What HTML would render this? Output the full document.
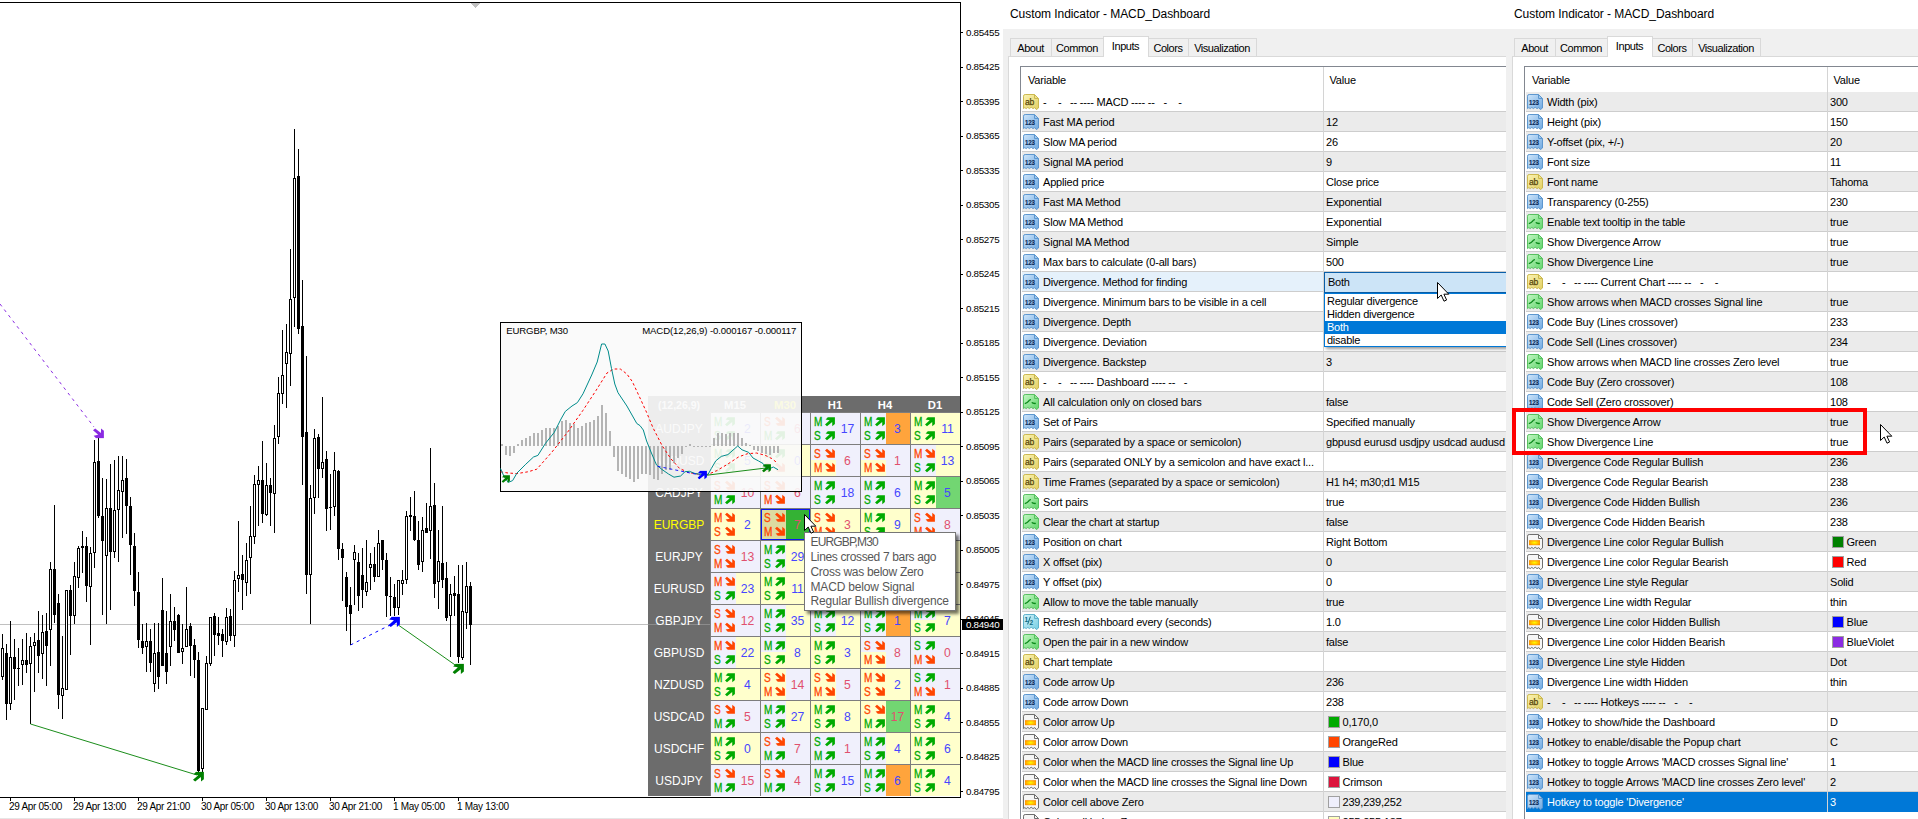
<!DOCTYPE html><html><head><meta charset="utf-8"><title>MACD Dashboard</title><style>
html,body{margin:0;padding:0;}
body{width:1918px;height:819px;overflow:hidden;background:#fff;position:relative;font-family:"Liberation Sans",Arial,sans-serif;}
.abs{position:absolute;}
#chart{position:absolute;left:0;top:0;width:1003px;height:819px;overflow:hidden;background:#fff;}
.dlg{position:absolute;top:0;height:819px;overflow:hidden;background:#fff;font-size:11px;color:#000;letter-spacing:-0.19px;}
.dlg .title{position:absolute;top:7px;font-size:12px;letter-spacing:-0.06px;white-space:nowrap;color:#000;}
.dlg .gray{position:absolute;left:0;top:29px;right:0;bottom:0;background:#f0f0f0;}
.tab{letter-spacing:-0.45px;text-indent:-1px;padding-top:1px;position:absolute;top:38px;height:18px;border:1px solid #d9d9d9;border-bottom:none;background:#f0f0f0;box-sizing:border-box;white-space:nowrap;line-height:17px;text-align:center;}
.tab.sel{top:36px;height:21px;background:#fff;z-index:3;line-height:17px;}
.page{position:absolute;top:56px;bottom:-5px;right:-5px;background:#fff;border:1px solid #d9d9d9;}
.tbl{position:absolute;top:66px;bottom:-5px;right:-5px;background:#fff;border:1px solid #828790;overflow:hidden;}
.hdr{position:absolute;left:0;top:0;right:0;height:24px;background:#fff;}
.hdr span{position:absolute;top:7px;white-space:nowrap;}
.row{position:absolute;left:1px;right:0;height:19px;border-bottom:1px solid #cdcdcd;white-space:nowrap;}
.row.g{background:#ebebeb;}
.row.sel{background:#e5f1fb;}
.row.hi{background:#0078d7;color:#fff;border-bottom-color:#0078d7;}
.row svg.ic{position:absolute;left:1px;top:2px;}
.row .t{position:absolute;left:21px;top:3.5px;line-height:13px;white-space:pre;}
.row .v{position:absolute;top:3.5px;line-height:13px;}
.row .sw{position:absolute;top:3.5px;width:10px;height:10px;border:1px solid #a0a0a0;box-sizing:content-box;}
.vdiv{position:absolute;top:0;bottom:0;width:1px;background:#d4d4d4;z-index:2;}
#dash{position:absolute;left:648px;top:396px;width:312px;height:400px;background:#6c6c6c;}
#dash .h{position:absolute;top:0;height:17px;line-height:18.2px;color:#fff;font-weight:bold;font-size:11.3px;text-align:center;width:50px;}
#dash .lab{position:absolute;left:0;width:62px;height:32px;line-height:34px;color:#fff;font-size:12px;text-align:center;}
.cell{position:absolute;width:49px;height:31px;border-left:1px solid #7d7d7d;border-top:1px solid #7d7d7d;font-size:12.5px;overflow:hidden;}
.cell i{position:absolute;display:block;}
.cell .l{position:absolute;left:2.9px;font-size:12px;line-height:12px;height:12px;transform:scaleX(0.84);transform-origin:0 0;-webkit-text-stroke:0.3px;}
.cell .n{position:absolute;left:24.5px;width:24px;top:0;height:31px;line-height:32px;text-align:center;font-size:12.2px;}
.cell svg{position:absolute;left:14px;}
#popup{position:absolute;left:500px;top:322px;width:300px;height:168px;border:1px solid #000;background:rgba(250,250,250,0.91);font-size:9px;}
#tip{position:absolute;left:804px;top:532px;width:150px;height:77px;border:1px solid #767676;background:#fff;box-shadow:3px 3px 3px rgba(0,0,0,0.55);}
#tip div{position:absolute;left:5px;white-space:nowrap;}
</style></head><body>
<svg width="0" height="0" style="position:absolute"><defs>
<linearGradient id="gy" x1="0" y1="0" x2="1" y2="1"><stop offset="0" stop-color="#fbf4b4"/><stop offset="1" stop-color="#e2cf63"/></linearGradient>
<linearGradient id="gb" x1="0" y1="0" x2="1" y2="1"><stop offset="0" stop-color="#cfe6fb"/><stop offset="1" stop-color="#6fa8e0"/></linearGradient>
<linearGradient id="gg" x1="0" y1="0" x2="1" y2="1"><stop offset="0" stop-color="#c4f7c4"/><stop offset="1" stop-color="#5fd46a"/></linearGradient>
<linearGradient id="gc" x1="0" y1="0" x2="1" y2="1"><stop offset="0" stop-color="#d6f3fa"/><stop offset="1" stop-color="#74cde2"/></linearGradient>
<radialGradient id="go" cx="0.5" cy="0.5" r="0.6"><stop offset="0" stop-color="#ffff00"/><stop offset="1" stop-color="#ff8800"/></radialGradient>
<symbol id="i-ab" viewBox="0 0 16 16"><path d="M0.5,2.2 Q0.5,0.5 2.2,0.5 L11.5,0.5 L15.5,4.5 L15.5,14 L13.4,15.6 L11.8,13.6 L10,14.6 L8.2,13.2 L6.4,14.6 L4.8,13.4 L3.2,14.6 L1.8,13.6 L0.5,14.6 Z" fill="url(#gy)" stroke="#cbb84f" stroke-width="1"/><path d="M11.5,0.5 L11.5,4.5 L15.5,4.5" fill="none" stroke="#cbb84f" stroke-width="1"/><text x="2" y="10.7" font-size="9.3" font-family="Liberation Sans,Arial,sans-serif" fill="#54460a" stroke="#54460a" stroke-width="0.25" textLength="9.2" lengthAdjust="spacingAndGlyphs">ab</text></symbol>
<symbol id="i-n" viewBox="0 0 16 16"><path d="M0.5,2.2 Q0.5,0.5 2.2,0.5 L11.5,0.5 L15.5,4.5 L15.5,14 L13.4,15.6 L11.8,13.6 L10,14.6 L8.2,13.2 L6.4,14.6 L4.8,13.4 L3.2,14.6 L1.8,13.6 L0.5,14.6 Z" fill="url(#gb)" stroke="#5d97cf" stroke-width="1"/><path d="M11.5,0.5 L11.5,4.5 L15.5,4.5" fill="none" stroke="#5d97cf" stroke-width="1"/><text x="2" y="10.7" font-size="7.8" font-weight="bold" font-family="Liberation Sans,Arial,sans-serif" fill="#0a2a58" stroke="#0a2a58" stroke-width="0.15" textLength="9.8" lengthAdjust="spacingAndGlyphs">123</text></symbol>
<symbol id="i-b" viewBox="0 0 16 16"><path d="M0.5,2.2 Q0.5,0.5 2.2,0.5 L11.5,0.5 L15.5,4.5 L15.5,14 L13.4,15.6 L11.8,13.6 L10,14.6 L8.2,13.2 L6.4,14.6 L4.8,13.4 L3.2,14.6 L1.8,13.6 L0.5,14.6 Z" fill="url(#gg)" stroke="#58c060" stroke-width="1"/><path d="M11.5,0.5 L11.5,4.5 L15.5,4.5" fill="none" stroke="#58c060" stroke-width="1"/><path d="M1.8,9.6 Q4,9.2 5.4,7.4 Q6.6,5.6 8,5.6" fill="none" stroke="#0b8a1a" stroke-width="1.4"/><path d="M8.8,8.4 Q9.8,9.6 12.8,9.4" fill="none" stroke="#0b8a1a" stroke-width="1.4"/></symbol>
<symbol id="i-d" viewBox="0 0 16 16"><path d="M0.5,2.2 Q0.5,0.5 2.2,0.5 L11.5,0.5 L15.5,4.5 L15.5,14 L13.4,15.6 L11.8,13.6 L10,14.6 L8.2,13.2 L6.4,14.6 L4.8,13.4 L3.2,14.6 L1.8,13.6 L0.5,14.6 Z" fill="url(#gc)" stroke="#5fb3cc" stroke-width="1"/><path d="M11.5,0.5 L11.5,4.5 L15.5,4.5" fill="none" stroke="#5fb3cc" stroke-width="1"/><text x="1.6" y="7.8" font-size="6.5" font-weight="bold" font-family="Liberation Sans,Arial,sans-serif" fill="#116a80">1</text><path d="M4.6,10.4 L7.4,2.6" stroke="#116a80" stroke-width="1" fill="none"/><text x="6.6" y="11.4" font-size="6.5" font-weight="bold" font-family="Liberation Sans,Arial,sans-serif" fill="#116a80">2</text></symbol>
<symbol id="i-c" viewBox="0 0 16 16"><path d="M0.5,2.2 Q0.5,0.5 2.2,0.5 L11.5,0.5 L15.5,4.5 L15.5,14 L13.4,15.6 L11.8,13.6 L10,14.6 L8.2,13.2 L6.4,14.6 L4.8,13.4 L3.2,14.6 L1.8,13.6 L0.5,14.6 Z" fill="#f6f6f6" stroke="#6e6e6e" stroke-width="1"/><path d="M11.5,0.5 L11.5,4.5 L15.5,4.5" fill="none" stroke="#6e6e6e" stroke-width="1"/><rect x="2" y="6.2" width="11" height="5" fill="url(#go)"/></symbol>
<symbol id="au" viewBox="0 0 10 10"><polygon points="2.8,0.3 9.9,0.3 9.9,7 7.3,9.2 7.2,4.9 2,9.2 0,7.6 4.7,3.3 0.6,2.5"/></symbol>
<symbol id="ad" viewBox="0 0 10 10"><polygon points="2.8,9.7 9.9,9.7 9.9,3 7.3,0.8 7.2,5.1 2,0.8 0,2.4 4.7,6.7 0.6,7.5"/></symbol>
</defs></svg>
<div id="chart">
<svg class="abs" style="left:0;top:0" width="1003" height="819" viewBox="0 0 1003 819" shape-rendering="crispEdges">
<rect x="0" y="2" width="961" height="1" fill="#000"/>
<rect x="960" y="2" width="1" height="796" fill="#000"/>
<rect x="0" y="797" width="961" height="1" fill="#000"/>
<polygon points="470,3 480,3 475,8" fill="#c0c0c0"/>
<rect x="0" y="624" width="960" height="1" fill="#c0c0c0"/>
<rect x="2" y="634" width="1" height="46" fill="#000"/>
<rect x="1" y="648" width="3" height="29" fill="#000"/>
<rect x="2" y="649" width="1" height="27" fill="#fff"/>
<rect x="6" y="644" width="1" height="76" fill="#000"/>
<rect x="5" y="653" width="3" height="51" fill="#000"/>
<rect x="10" y="621" width="1" height="89" fill="#000"/>
<rect x="9" y="657" width="3" height="47" fill="#000"/>
<rect x="10" y="658" width="1" height="45" fill="#fff"/>
<rect x="14" y="639" width="1" height="61" fill="#000"/>
<rect x="13" y="657" width="3" height="12" fill="#000"/>
<rect x="18" y="648" width="1" height="38" fill="#000"/>
<rect x="17" y="668" width="3" height="1" fill="#000"/>
<rect x="22" y="639" width="1" height="46" fill="#000"/>
<rect x="21" y="660" width="3" height="5" fill="#000"/>
<rect x="22" y="661" width="1" height="3" fill="#fff"/>
<rect x="26" y="633" width="1" height="40" fill="#000"/>
<rect x="25" y="660" width="3" height="5" fill="#000"/>
<rect x="30" y="637" width="1" height="87" fill="#000"/>
<rect x="29" y="646" width="3" height="18" fill="#000"/>
<rect x="30" y="647" width="1" height="16" fill="#fff"/>
<rect x="34" y="633" width="1" height="59" fill="#000"/>
<rect x="33" y="642" width="3" height="4" fill="#000"/>
<rect x="34" y="643" width="1" height="2" fill="#fff"/>
<rect x="38" y="611" width="1" height="62" fill="#000"/>
<rect x="37" y="640" width="3" height="16" fill="#000"/>
<rect x="42" y="615" width="1" height="64" fill="#000"/>
<rect x="41" y="632" width="3" height="22" fill="#000"/>
<rect x="42" y="633" width="1" height="20" fill="#fff"/>
<rect x="46" y="613" width="1" height="73" fill="#000"/>
<rect x="45" y="631" width="3" height="15" fill="#000"/>
<rect x="50" y="562" width="1" height="104" fill="#000"/>
<rect x="49" y="569" width="3" height="61" fill="#000"/>
<rect x="50" y="570" width="1" height="59" fill="#fff"/>
<rect x="54" y="505" width="1" height="118" fill="#000"/>
<rect x="53" y="569" width="3" height="46" fill="#000"/>
<rect x="58" y="594" width="1" height="115" fill="#000"/>
<rect x="57" y="603" width="3" height="92" fill="#000"/>
<rect x="62" y="636" width="1" height="83" fill="#000"/>
<rect x="61" y="688" width="3" height="8" fill="#000"/>
<rect x="62" y="689" width="1" height="6" fill="#fff"/>
<rect x="66" y="590" width="1" height="100" fill="#000"/>
<rect x="65" y="590" width="3" height="100" fill="#000"/>
<rect x="66" y="591" width="1" height="98" fill="#fff"/>
<rect x="70" y="585" width="1" height="70" fill="#000"/>
<rect x="69" y="590" width="3" height="26" fill="#000"/>
<rect x="74" y="562" width="1" height="62" fill="#000"/>
<rect x="73" y="576" width="3" height="40" fill="#000"/>
<rect x="74" y="577" width="1" height="38" fill="#fff"/>
<rect x="78" y="546" width="1" height="42" fill="#000"/>
<rect x="77" y="548" width="3" height="30" fill="#000"/>
<rect x="78" y="549" width="1" height="28" fill="#fff"/>
<rect x="82" y="531" width="1" height="42" fill="#000"/>
<rect x="81" y="546" width="3" height="2" fill="#000"/>
<rect x="86" y="537" width="1" height="65" fill="#000"/>
<rect x="85" y="546" width="3" height="40" fill="#000"/>
<rect x="90" y="547" width="1" height="98" fill="#000"/>
<rect x="89" y="553" width="3" height="34" fill="#000"/>
<rect x="90" y="554" width="1" height="32" fill="#fff"/>
<rect x="94" y="440" width="1" height="128" fill="#000"/>
<rect x="93" y="462" width="3" height="91" fill="#000"/>
<rect x="94" y="463" width="1" height="89" fill="#fff"/>
<rect x="98" y="438" width="1" height="80" fill="#000"/>
<rect x="97" y="461" width="3" height="55" fill="#000"/>
<rect x="102" y="478" width="1" height="137" fill="#000"/>
<rect x="101" y="516" width="3" height="25" fill="#000"/>
<rect x="106" y="479" width="1" height="145" fill="#000"/>
<rect x="105" y="508" width="3" height="48" fill="#000"/>
<rect x="106" y="509" width="1" height="46" fill="#fff"/>
<rect x="110" y="464" width="1" height="146" fill="#000"/>
<rect x="109" y="508" width="3" height="44" fill="#000"/>
<rect x="114" y="460" width="1" height="98" fill="#000"/>
<rect x="113" y="510" width="3" height="42" fill="#000"/>
<rect x="114" y="511" width="1" height="40" fill="#fff"/>
<rect x="118" y="456" width="1" height="106" fill="#000"/>
<rect x="117" y="490" width="3" height="20" fill="#000"/>
<rect x="118" y="491" width="1" height="18" fill="#fff"/>
<rect x="122" y="456" width="1" height="82" fill="#000"/>
<rect x="121" y="480" width="3" height="12" fill="#000"/>
<rect x="122" y="481" width="1" height="10" fill="#fff"/>
<rect x="126" y="459" width="1" height="75" fill="#000"/>
<rect x="125" y="478" width="3" height="28" fill="#000"/>
<rect x="130" y="497" width="1" height="78" fill="#000"/>
<rect x="129" y="506" width="3" height="39" fill="#000"/>
<rect x="134" y="533" width="1" height="73" fill="#000"/>
<rect x="133" y="546" width="3" height="45" fill="#000"/>
<rect x="138" y="572" width="1" height="76" fill="#000"/>
<rect x="137" y="592" width="3" height="48" fill="#000"/>
<rect x="142" y="624" width="1" height="30" fill="#000"/>
<rect x="141" y="641" width="3" height="7" fill="#000"/>
<rect x="146" y="623" width="1" height="49" fill="#000"/>
<rect x="145" y="641" width="3" height="6" fill="#000"/>
<rect x="146" y="642" width="1" height="4" fill="#fff"/>
<rect x="150" y="629" width="1" height="43" fill="#000"/>
<rect x="149" y="641" width="3" height="22" fill="#000"/>
<rect x="154" y="623" width="1" height="69" fill="#000"/>
<rect x="153" y="653" width="3" height="31" fill="#000"/>
<rect x="154" y="654" width="1" height="29" fill="#fff"/>
<rect x="158" y="623" width="1" height="66" fill="#000"/>
<rect x="157" y="652" width="3" height="25" fill="#000"/>
<rect x="162" y="578" width="1" height="88" fill="#000"/>
<rect x="161" y="610" width="3" height="56" fill="#000"/>
<rect x="166" y="611" width="1" height="73" fill="#000"/>
<rect x="165" y="653" width="3" height="19" fill="#000"/>
<rect x="170" y="594" width="1" height="72" fill="#000"/>
<rect x="169" y="621" width="3" height="26" fill="#000"/>
<rect x="170" y="622" width="1" height="24" fill="#fff"/>
<rect x="174" y="607" width="1" height="34" fill="#000"/>
<rect x="173" y="621" width="3" height="9" fill="#000"/>
<rect x="178" y="614" width="1" height="39" fill="#000"/>
<rect x="177" y="615" width="3" height="38" fill="#000"/>
<rect x="182" y="624" width="1" height="40" fill="#000"/>
<rect x="181" y="648" width="3" height="4" fill="#000"/>
<rect x="182" y="649" width="1" height="2" fill="#fff"/>
<rect x="186" y="587" width="1" height="60" fill="#000"/>
<rect x="185" y="629" width="3" height="18" fill="#000"/>
<rect x="186" y="630" width="1" height="16" fill="#fff"/>
<rect x="190" y="623" width="1" height="53" fill="#000"/>
<rect x="189" y="626" width="3" height="20" fill="#000"/>
<rect x="194" y="639" width="1" height="39" fill="#000"/>
<rect x="193" y="645" width="3" height="15" fill="#000"/>
<rect x="198" y="652" width="1" height="120" fill="#000"/>
<rect x="197" y="660" width="3" height="111" fill="#000"/>
<rect x="202" y="708" width="1" height="64" fill="#000"/>
<rect x="201" y="708" width="3" height="61" fill="#000"/>
<rect x="202" y="709" width="1" height="59" fill="#fff"/>
<rect x="206" y="656" width="1" height="54" fill="#000"/>
<rect x="205" y="663" width="3" height="47" fill="#000"/>
<rect x="206" y="664" width="1" height="45" fill="#fff"/>
<rect x="210" y="617" width="1" height="49" fill="#000"/>
<rect x="209" y="617" width="3" height="47" fill="#000"/>
<rect x="210" y="618" width="1" height="45" fill="#fff"/>
<rect x="214" y="613" width="1" height="43" fill="#000"/>
<rect x="213" y="616" width="3" height="19" fill="#000"/>
<rect x="218" y="617" width="1" height="28" fill="#000"/>
<rect x="217" y="633" width="3" height="3" fill="#000"/>
<rect x="222" y="629" width="1" height="28" fill="#000"/>
<rect x="221" y="634" width="3" height="7" fill="#000"/>
<rect x="226" y="608" width="1" height="37" fill="#000"/>
<rect x="225" y="617" width="3" height="25" fill="#000"/>
<rect x="226" y="618" width="1" height="23" fill="#fff"/>
<rect x="230" y="609" width="1" height="32" fill="#000"/>
<rect x="229" y="616" width="3" height="20" fill="#000"/>
<rect x="234" y="571" width="1" height="76" fill="#000"/>
<rect x="233" y="580" width="3" height="56" fill="#000"/>
<rect x="234" y="581" width="1" height="54" fill="#fff"/>
<rect x="238" y="521" width="1" height="71" fill="#000"/>
<rect x="237" y="575" width="3" height="4" fill="#000"/>
<rect x="238" y="576" width="1" height="2" fill="#fff"/>
<rect x="242" y="555" width="1" height="55" fill="#000"/>
<rect x="241" y="574" width="3" height="6" fill="#000"/>
<rect x="246" y="543" width="1" height="53" fill="#000"/>
<rect x="245" y="560" width="3" height="23" fill="#000"/>
<rect x="246" y="561" width="1" height="21" fill="#fff"/>
<rect x="250" y="506" width="1" height="88" fill="#000"/>
<rect x="249" y="536" width="3" height="22" fill="#000"/>
<rect x="250" y="537" width="1" height="20" fill="#fff"/>
<rect x="254" y="475" width="1" height="69" fill="#000"/>
<rect x="253" y="484" width="3" height="53" fill="#000"/>
<rect x="254" y="485" width="1" height="51" fill="#fff"/>
<rect x="258" y="466" width="1" height="60" fill="#000"/>
<rect x="257" y="480" width="3" height="5" fill="#000"/>
<rect x="258" y="481" width="1" height="3" fill="#fff"/>
<rect x="262" y="441" width="1" height="82" fill="#000"/>
<rect x="261" y="480" width="3" height="34" fill="#000"/>
<rect x="266" y="463" width="1" height="53" fill="#000"/>
<rect x="265" y="485" width="3" height="30" fill="#000"/>
<rect x="266" y="486" width="1" height="28" fill="#fff"/>
<rect x="270" y="478" width="1" height="48" fill="#000"/>
<rect x="269" y="485" width="3" height="8" fill="#000"/>
<rect x="274" y="425" width="1" height="108" fill="#000"/>
<rect x="273" y="438" width="3" height="56" fill="#000"/>
<rect x="274" y="439" width="1" height="54" fill="#fff"/>
<rect x="278" y="377" width="1" height="67" fill="#000"/>
<rect x="277" y="393" width="3" height="44" fill="#000"/>
<rect x="278" y="394" width="1" height="42" fill="#fff"/>
<rect x="282" y="330" width="1" height="74" fill="#000"/>
<rect x="281" y="375" width="3" height="19" fill="#000"/>
<rect x="282" y="376" width="1" height="17" fill="#fff"/>
<rect x="286" y="324" width="1" height="84" fill="#000"/>
<rect x="285" y="352" width="3" height="12" fill="#000"/>
<rect x="286" y="353" width="1" height="10" fill="#fff"/>
<rect x="290" y="249" width="1" height="137" fill="#000"/>
<rect x="289" y="299" width="3" height="55" fill="#000"/>
<rect x="290" y="300" width="1" height="53" fill="#fff"/>
<rect x="294" y="129" width="1" height="198" fill="#000"/>
<rect x="293" y="178" width="3" height="120" fill="#000"/>
<rect x="294" y="179" width="1" height="118" fill="#fff"/>
<rect x="298" y="149" width="1" height="185" fill="#000"/>
<rect x="297" y="176" width="3" height="153" fill="#000"/>
<rect x="302" y="280" width="1" height="205" fill="#000"/>
<rect x="301" y="326" width="3" height="111" fill="#000"/>
<rect x="306" y="356" width="1" height="238" fill="#000"/>
<rect x="305" y="432" width="3" height="143" fill="#000"/>
<rect x="310" y="485" width="1" height="139" fill="#000"/>
<rect x="309" y="498" width="3" height="77" fill="#000"/>
<rect x="310" y="499" width="1" height="75" fill="#fff"/>
<rect x="314" y="429" width="1" height="85" fill="#000"/>
<rect x="313" y="438" width="3" height="60" fill="#000"/>
<rect x="314" y="439" width="1" height="58" fill="#fff"/>
<rect x="318" y="434" width="1" height="64" fill="#000"/>
<rect x="317" y="437" width="3" height="32" fill="#000"/>
<rect x="322" y="397" width="1" height="81" fill="#000"/>
<rect x="321" y="462" width="3" height="7" fill="#000"/>
<rect x="322" y="463" width="1" height="5" fill="#fff"/>
<rect x="326" y="451" width="1" height="80" fill="#000"/>
<rect x="325" y="459" width="3" height="50" fill="#000"/>
<rect x="330" y="474" width="1" height="56" fill="#000"/>
<rect x="329" y="507" width="3" height="1" fill="#000"/>
<rect x="334" y="452" width="1" height="64" fill="#000"/>
<rect x="333" y="470" width="3" height="37" fill="#000"/>
<rect x="334" y="471" width="1" height="35" fill="#fff"/>
<rect x="338" y="470" width="1" height="90" fill="#000"/>
<rect x="337" y="471" width="3" height="78" fill="#000"/>
<rect x="342" y="543" width="1" height="58" fill="#000"/>
<rect x="341" y="549" width="3" height="9" fill="#000"/>
<rect x="346" y="572" width="1" height="59" fill="#000"/>
<rect x="345" y="577" width="3" height="30" fill="#000"/>
<rect x="350" y="587" width="1" height="58" fill="#000"/>
<rect x="349" y="605" width="3" height="9" fill="#000"/>
<rect x="354" y="545" width="1" height="60" fill="#000"/>
<rect x="353" y="552" width="3" height="8" fill="#000"/>
<rect x="354" y="553" width="1" height="6" fill="#fff"/>
<rect x="358" y="553" width="1" height="58" fill="#000"/>
<rect x="357" y="562" width="3" height="34" fill="#000"/>
<rect x="362" y="548" width="1" height="60" fill="#000"/>
<rect x="361" y="575" width="3" height="15" fill="#000"/>
<rect x="366" y="540" width="1" height="56" fill="#000"/>
<rect x="365" y="582" width="3" height="10" fill="#000"/>
<rect x="366" y="583" width="1" height="8" fill="#fff"/>
<rect x="370" y="553" width="1" height="37" fill="#000"/>
<rect x="369" y="564" width="3" height="4" fill="#000"/>
<rect x="370" y="565" width="1" height="2" fill="#fff"/>
<rect x="374" y="547" width="1" height="35" fill="#000"/>
<rect x="373" y="564" width="3" height="13" fill="#000"/>
<rect x="378" y="530" width="1" height="47" fill="#000"/>
<rect x="377" y="543" width="3" height="34" fill="#000"/>
<rect x="378" y="544" width="1" height="32" fill="#fff"/>
<rect x="382" y="540" width="1" height="30" fill="#000"/>
<rect x="381" y="540" width="3" height="20" fill="#000"/>
<rect x="386" y="553" width="1" height="64" fill="#000"/>
<rect x="385" y="560" width="3" height="36" fill="#000"/>
<rect x="390" y="577" width="1" height="39" fill="#000"/>
<rect x="389" y="596" width="3" height="1" fill="#000"/>
<rect x="394" y="584" width="1" height="32" fill="#000"/>
<rect x="393" y="597" width="3" height="11" fill="#000"/>
<rect x="398" y="580" width="1" height="35" fill="#000"/>
<rect x="397" y="580" width="3" height="28" fill="#000"/>
<rect x="398" y="581" width="1" height="26" fill="#fff"/>
<rect x="402" y="570" width="1" height="25" fill="#000"/>
<rect x="401" y="580" width="3" height="4" fill="#000"/>
<rect x="402" y="581" width="1" height="2" fill="#fff"/>
<rect x="406" y="511" width="1" height="73" fill="#000"/>
<rect x="405" y="516" width="3" height="64" fill="#000"/>
<rect x="406" y="517" width="1" height="62" fill="#fff"/>
<rect x="410" y="497" width="1" height="34" fill="#000"/>
<rect x="409" y="515" width="3" height="2" fill="#000"/>
<rect x="414" y="491" width="1" height="50" fill="#000"/>
<rect x="413" y="516" width="3" height="24" fill="#000"/>
<rect x="418" y="521" width="1" height="49" fill="#000"/>
<rect x="417" y="540" width="3" height="25" fill="#000"/>
<rect x="422" y="517" width="1" height="55" fill="#000"/>
<rect x="421" y="530" width="3" height="32" fill="#000"/>
<rect x="422" y="531" width="1" height="30" fill="#fff"/>
<rect x="426" y="503" width="1" height="30" fill="#000"/>
<rect x="425" y="528" width="3" height="5" fill="#000"/>
<rect x="430" y="448" width="1" height="111" fill="#000"/>
<rect x="429" y="506" width="3" height="25" fill="#000"/>
<rect x="430" y="507" width="1" height="23" fill="#fff"/>
<rect x="434" y="483" width="1" height="115" fill="#000"/>
<rect x="433" y="505" width="3" height="79" fill="#000"/>
<rect x="438" y="530" width="1" height="79" fill="#000"/>
<rect x="437" y="561" width="3" height="21" fill="#000"/>
<rect x="438" y="562" width="1" height="19" fill="#fff"/>
<rect x="442" y="506" width="1" height="82" fill="#000"/>
<rect x="441" y="563" width="3" height="17" fill="#000"/>
<rect x="446" y="562" width="1" height="59" fill="#000"/>
<rect x="445" y="578" width="3" height="40" fill="#000"/>
<rect x="450" y="584" width="1" height="73" fill="#000"/>
<rect x="449" y="594" width="3" height="22" fill="#000"/>
<rect x="450" y="595" width="1" height="20" fill="#fff"/>
<rect x="454" y="576" width="1" height="40" fill="#000"/>
<rect x="453" y="593" width="3" height="3" fill="#000"/>
<rect x="458" y="565" width="1" height="98" fill="#000"/>
<rect x="457" y="594" width="3" height="63" fill="#000"/>
<rect x="462" y="565" width="1" height="95" fill="#000"/>
<rect x="461" y="611" width="3" height="47" fill="#000"/>
<rect x="462" y="612" width="1" height="45" fill="#fff"/>
<rect x="466" y="562" width="1" height="67" fill="#000"/>
<rect x="465" y="586" width="3" height="27" fill="#000"/>
<rect x="466" y="587" width="1" height="25" fill="#fff"/>
<rect x="470" y="582" width="1" height="83" fill="#000"/>
<rect x="469" y="586" width="3" height="39" fill="#000"/>
<rect x="961" y="32" width="2" height="1" fill="#000"/>
<rect x="961" y="67" width="2" height="1" fill="#000"/>
<rect x="961" y="101" width="2" height="1" fill="#000"/>
<rect x="961" y="136" width="2" height="1" fill="#000"/>
<rect x="961" y="170" width="2" height="1" fill="#000"/>
<rect x="961" y="205" width="2" height="1" fill="#000"/>
<rect x="961" y="239" width="2" height="1" fill="#000"/>
<rect x="961" y="274" width="2" height="1" fill="#000"/>
<rect x="961" y="308" width="2" height="1" fill="#000"/>
<rect x="961" y="343" width="2" height="1" fill="#000"/>
<rect x="961" y="377" width="2" height="1" fill="#000"/>
<rect x="961" y="412" width="2" height="1" fill="#000"/>
<rect x="961" y="446" width="2" height="1" fill="#000"/>
<rect x="961" y="481" width="2" height="1" fill="#000"/>
<rect x="961" y="515" width="2" height="1" fill="#000"/>
<rect x="961" y="550" width="2" height="1" fill="#000"/>
<rect x="961" y="584" width="2" height="1" fill="#000"/>
<rect x="961" y="619" width="2" height="1" fill="#000"/>
<rect x="961" y="653" width="2" height="1" fill="#000"/>
<rect x="961" y="688" width="2" height="1" fill="#000"/>
<rect x="961" y="722" width="2" height="1" fill="#000"/>
<rect x="961" y="757" width="2" height="1" fill="#000"/>
<rect x="961" y="791" width="2" height="1" fill="#000"/>
<rect x="10" y="798" width="1" height="3" fill="#000"/>
<rect x="74" y="798" width="1" height="3" fill="#000"/>
<rect x="138" y="798" width="1" height="3" fill="#000"/>
<rect x="202" y="798" width="1" height="3" fill="#000"/>
<rect x="266" y="798" width="1" height="3" fill="#000"/>
<rect x="330" y="798" width="1" height="3" fill="#000"/>
<rect x="394" y="798" width="1" height="3" fill="#000"/>
<rect x="458" y="798" width="1" height="3" fill="#000"/>
</svg>
<svg class="abs" style="left:0;top:0" width="1003" height="819" viewBox="0 0 1003 819">
<g font-family='"Liberation Sans", Arial, sans-serif' font-size="9.8" letter-spacing="-0.3" fill="#000">
<text x="966" y="35.9">0.85455</text>
<text x="966" y="70.4">0.85425</text>
<text x="966" y="104.9">0.85395</text>
<text x="966" y="139.4">0.85365</text>
<text x="966" y="173.9">0.85335</text>
<text x="966" y="208.4">0.85305</text>
<text x="966" y="242.9">0.85275</text>
<text x="966" y="277.4">0.85245</text>
<text x="966" y="311.9">0.85215</text>
<text x="966" y="346.4">0.85185</text>
<text x="966" y="380.9">0.85155</text>
<text x="966" y="415.4">0.85125</text>
<text x="966" y="449.9">0.85095</text>
<text x="966" y="484.4">0.85065</text>
<text x="966" y="518.9">0.85035</text>
<text x="966" y="553.4">0.85005</text>
<text x="966" y="587.9">0.84975</text>
<text x="966" y="622.4">0.84945</text>
<text x="966" y="656.9">0.84915</text>
<text x="966" y="691.4">0.84885</text>
<text x="966" y="725.9">0.84855</text>
<text x="966" y="760.4">0.84825</text>
<text x="966" y="794.9">0.84795</text>
<text x="9" y="810" font-size="10" letter-spacing="-0.3">29 Apr 05:00</text>
<text x="73" y="810" font-size="10" letter-spacing="-0.3">29 Apr 13:00</text>
<text x="137" y="810" font-size="10" letter-spacing="-0.3">29 Apr 21:00</text>
<text x="201" y="810" font-size="10" letter-spacing="-0.3">30 Apr 05:00</text>
<text x="265" y="810" font-size="10" letter-spacing="-0.3">30 Apr 13:00</text>
<text x="329" y="810" font-size="10" letter-spacing="-0.3">30 Apr 21:00</text>
<text x="393" y="810" font-size="10" letter-spacing="-0.3">1 May 05:00</text>
<text x="457" y="810" font-size="10" letter-spacing="-0.3">1 May 13:00</text>
</g>
<line x1="0" y1="304" x2="94" y2="427" stroke="#8a2be2" stroke-width="1" stroke-dasharray="3,4"/>
<line x1="30.5" y1="724" x2="197" y2="775" stroke="#008000" stroke-width="0.9"/>
<line x1="350.5" y1="645" x2="392" y2="624" stroke="#0000ff" stroke-width="1" stroke-dasharray="3,4"/>
<line x1="399" y1="625.5" x2="458" y2="667" stroke="#008000" stroke-width="0.9"/>
<use href="#ad" x="93" y="427.5" width="11" height="11" fill="#8a2be2"/>
<use href="#au" x="193" y="771.5" width="11" height="11" fill="#008000"/>
<use href="#au" x="388.5" y="616.5" width="11.5" height="11.5" fill="#0000ff"/>
<use href="#au" x="452.5" y="663.5" width="11.5" height="11.5" fill="#008000"/>
</svg>
<div class="abs" style="left:962px;top:619px;width:41px;height:11px;background:#000;color:#fff;font-size:9.8px;letter-spacing:-0.3px;line-height:11px;"><span style="position:absolute;left:4px;top:0">0.84940</span></div>
<div class="abs" style="left:0;top:818px;width:1003px;height:1px;background:#e6e6e6"></div>
<div id="dash">
<div class="h" style="left:0;width:62px;font-size:10.5px">(12,26,9)</div>
<div class="h" style="left:62px;color:#fff">M15</div>
<div class="h" style="left:112px;color:#ffff00">M30</div>
<div class="h" style="left:162px;color:#fff">H1</div>
<div class="h" style="left:212px;color:#fff">H4</div>
<div class="h" style="left:262px;color:#fff">D1</div>
<div class="lab" style="top:16px;color:#fff">AUDJPY</div>
<div class="cell" style="left:62px;top:16px;">
<i style="left:0;top:0;width:25px;height:15px;background:#f0f0fc"></i>
<i style="left:0;top:15px;width:25px;height:16px;background:#f0f0fc"></i>
<i style="left:25px;top:0;width:24px;height:31px;background:#f0f0fc"></i>
<span class="l" style="top:3px;color:#00aa00">M</span><svg style="top:4px" width="10" height="10" fill="#00aa00"><use href="#au"/></svg>
<span class="l" style="top:17px;color:#00aa00">S</span><svg style="top:18px" width="10" height="10" fill="#00aa00"><use href="#au"/></svg>
<span class="n" style="color:#4646ff">2</span>
</div>
<div class="cell" style="left:112px;top:16px;">
<i style="left:0;top:0;width:25px;height:15px;background:#f0f0fc"></i>
<i style="left:0;top:15px;width:25px;height:16px;background:#f0f0fc"></i>
<i style="left:25px;top:0;width:24px;height:31px;background:#f0f0fc"></i>
<span class="l" style="top:3px;color:#ff4500">S</span><svg style="top:3px" width="10" height="10" fill="#ff4500"><use href="#ad"/></svg>
<span class="l" style="top:17px;color:#00aa00">M</span><svg style="top:18px" width="10" height="10" fill="#00aa00"><use href="#au"/></svg>
<span class="n" style="color:#e0506e">6</span>
</div>
<div class="cell" style="left:162px;top:16px;">
<i style="left:0;top:0;width:25px;height:15px;background:#f0f0fc"></i>
<i style="left:0;top:15px;width:25px;height:16px;background:#f0f0fc"></i>
<i style="left:25px;top:0;width:24px;height:31px;background:#f0f0fc"></i>
<span class="l" style="top:3px;color:#00aa00">M</span><svg style="top:4px" width="10" height="10" fill="#00aa00"><use href="#au"/></svg>
<span class="l" style="top:17px;color:#00aa00">S</span><svg style="top:18px" width="10" height="10" fill="#00aa00"><use href="#au"/></svg>
<span class="n" style="color:#4646ff">17</span>
</div>
<div class="cell" style="left:212px;top:16px;">
<i style="left:0;top:0;width:25px;height:15px;background:#f0f0fc"></i>
<i style="left:0;top:15px;width:25px;height:16px;background:#f0f0fc"></i>
<i style="left:25px;top:0;width:24px;height:31px;background:#ffa43c"></i>
<span class="l" style="top:3px;color:#00aa00">M</span><svg style="top:4px" width="10" height="10" fill="#00aa00"><use href="#au"/></svg>
<span class="l" style="top:17px;color:#00aa00">S</span><svg style="top:18px" width="10" height="10" fill="#00aa00"><use href="#au"/></svg>
<span class="n" style="color:#4646ff">3</span>
</div>
<div class="cell" style="left:262px;top:16px;">
<i style="left:0;top:0;width:25px;height:15px;background:#ffffcc"></i>
<i style="left:0;top:15px;width:25px;height:16px;background:#ffffcc"></i>
<i style="left:25px;top:0;width:24px;height:31px;background:#ffffcc"></i>
<span class="l" style="top:3px;color:#00aa00">M</span><svg style="top:4px" width="10" height="10" fill="#00aa00"><use href="#au"/></svg>
<span class="l" style="top:17px;color:#00aa00">S</span><svg style="top:18px" width="10" height="10" fill="#00aa00"><use href="#au"/></svg>
<span class="n" style="color:#4646ff">11</span>
</div>
<div class="lab" style="top:48px;color:#fff">AUDUSD</div>
<div class="cell" style="left:62px;top:48px;">
<i style="left:0;top:0;width:25px;height:15px;background:#ffffcc"></i>
<i style="left:0;top:15px;width:25px;height:16px;background:#ffffcc"></i>
<i style="left:25px;top:0;width:24px;height:31px;background:#ffffcc"></i>
<span class="l" style="top:3px;color:#00aa00">M</span><svg style="top:4px" width="10" height="10" fill="#00aa00"><use href="#au"/></svg>
<span class="l" style="top:17px;color:#00aa00">S</span><svg style="top:18px" width="10" height="10" fill="#00aa00"><use href="#au"/></svg>
<span class="n" style="color:#4646ff">5</span>
</div>
<div class="cell" style="left:112px;top:48px;">
<i style="left:0;top:0;width:25px;height:15px;background:#ffffcc"></i>
<i style="left:0;top:15px;width:25px;height:16px;background:#ffffcc"></i>
<i style="left:25px;top:0;width:24px;height:31px;background:#ffffcc"></i>
<span class="l" style="top:3px;color:#00aa00">M</span><svg style="top:4px" width="10" height="10" fill="#00aa00"><use href="#au"/></svg>
<span class="l" style="top:17px;color:#ff4500">S</span><svg style="top:17px" width="10" height="10" fill="#ff4500"><use href="#ad"/></svg>
<span class="n" style="color:#4646ff">0</span>
</div>
<div class="cell" style="left:162px;top:48px;">
<i style="left:0;top:0;width:25px;height:15px;background:#f0f0fc"></i>
<i style="left:0;top:15px;width:25px;height:16px;background:#ffffcc"></i>
<i style="left:25px;top:0;width:24px;height:31px;background:#f0f0fc"></i>
<span class="l" style="top:3px;color:#ff4500">S</span><svg style="top:3px" width="10" height="10" fill="#ff4500"><use href="#ad"/></svg>
<span class="l" style="top:17px;color:#ff4500">M</span><svg style="top:17px" width="10" height="10" fill="#ff4500"><use href="#ad"/></svg>
<span class="n" style="color:#e0506e">6</span>
</div>
<div class="cell" style="left:212px;top:48px;">
<i style="left:0;top:0;width:25px;height:15px;background:#f0f0fc"></i>
<i style="left:0;top:15px;width:25px;height:16px;background:#ffffcc"></i>
<i style="left:25px;top:0;width:24px;height:31px;background:#f0f0fc"></i>
<span class="l" style="top:3px;color:#ff4500">S</span><svg style="top:3px" width="10" height="10" fill="#ff4500"><use href="#ad"/></svg>
<span class="l" style="top:17px;color:#ff4500">M</span><svg style="top:17px" width="10" height="10" fill="#ff4500"><use href="#ad"/></svg>
<span class="n" style="color:#e0506e">1</span>
</div>
<div class="cell" style="left:262px;top:48px;">
<i style="left:0;top:0;width:25px;height:15px;background:#f0f0fc"></i>
<i style="left:0;top:15px;width:25px;height:16px;background:#f0f0fc"></i>
<i style="left:25px;top:0;width:24px;height:31px;background:#ffffcc"></i>
<span class="l" style="top:3px;color:#ff4500">M</span><svg style="top:3px" width="10" height="10" fill="#ff4500"><use href="#ad"/></svg>
<span class="l" style="top:17px;color:#00aa00">S</span><svg style="top:18px" width="10" height="10" fill="#00aa00"><use href="#au"/></svg>
<span class="n" style="color:#4646ff">13</span>
</div>
<div class="lab" style="top:80px;color:#fff">CADJPY</div>
<div class="cell" style="left:62px;top:80px;">
<i style="left:0;top:0;width:25px;height:15px;background:#f0f0fc"></i>
<i style="left:0;top:15px;width:25px;height:16px;background:#f0f0fc"></i>
<i style="left:25px;top:0;width:24px;height:31px;background:#f0f0fc"></i>
<span class="l" style="top:3px;color:#ff4500">S</span><svg style="top:3px" width="10" height="10" fill="#ff4500"><use href="#ad"/></svg>
<span class="l" style="top:17px;color:#00aa00">M</span><svg style="top:18px" width="10" height="10" fill="#00aa00"><use href="#au"/></svg>
<span class="n" style="color:#e0506e">10</span>
</div>
<div class="cell" style="left:112px;top:80px;">
<i style="left:0;top:0;width:25px;height:15px;background:#f0f0fc"></i>
<i style="left:0;top:15px;width:25px;height:16px;background:#f0f0fc"></i>
<i style="left:25px;top:0;width:24px;height:31px;background:#f0f0fc"></i>
<span class="l" style="top:3px;color:#ff4500">S</span><svg style="top:3px" width="10" height="10" fill="#ff4500"><use href="#ad"/></svg>
<span class="l" style="top:17px;color:#ff4500">M</span><svg style="top:17px" width="10" height="10" fill="#ff4500"><use href="#ad"/></svg>
<span class="n" style="color:#e0506e">6</span>
</div>
<div class="cell" style="left:162px;top:80px;">
<i style="left:0;top:0;width:25px;height:15px;background:#f0f0fc"></i>
<i style="left:0;top:15px;width:25px;height:16px;background:#f0f0fc"></i>
<i style="left:25px;top:0;width:24px;height:31px;background:#f0f0fc"></i>
<span class="l" style="top:3px;color:#00aa00">M</span><svg style="top:4px" width="10" height="10" fill="#00aa00"><use href="#au"/></svg>
<span class="l" style="top:17px;color:#00aa00">S</span><svg style="top:18px" width="10" height="10" fill="#00aa00"><use href="#au"/></svg>
<span class="n" style="color:#4646ff">18</span>
</div>
<div class="cell" style="left:212px;top:80px;">
<i style="left:0;top:0;width:25px;height:15px;background:#f0f0fc"></i>
<i style="left:0;top:15px;width:25px;height:16px;background:#f0f0fc"></i>
<i style="left:25px;top:0;width:24px;height:31px;background:#f0f0fc"></i>
<span class="l" style="top:3px;color:#00aa00">M</span><svg style="top:4px" width="10" height="10" fill="#00aa00"><use href="#au"/></svg>
<span class="l" style="top:17px;color:#00aa00">S</span><svg style="top:18px" width="10" height="10" fill="#00aa00"><use href="#au"/></svg>
<span class="n" style="color:#4646ff">6</span>
</div>
<div class="cell" style="left:262px;top:80px;">
<i style="left:0;top:0;width:25px;height:15px;background:#ffffcc"></i>
<i style="left:0;top:15px;width:25px;height:16px;background:#ffffcc"></i>
<i style="left:25px;top:0;width:24px;height:31px;background:#72d672"></i>
<span class="l" style="top:3px;color:#00aa00">M</span><svg style="top:4px" width="10" height="10" fill="#00aa00"><use href="#au"/></svg>
<span class="l" style="top:17px;color:#00aa00">S</span><svg style="top:18px" width="10" height="10" fill="#00aa00"><use href="#au"/></svg>
<span class="n" style="color:#4646ff">5</span>
</div>
<div class="lab" style="top:112px;color:#ffff00">EURGBP</div>
<div class="cell" style="left:62px;top:112px;">
<i style="left:0;top:0;width:25px;height:15px;background:#ffffcc"></i>
<i style="left:0;top:15px;width:25px;height:16px;background:#ffffcc"></i>
<i style="left:25px;top:0;width:24px;height:31px;background:#ffffcc"></i>
<span class="l" style="top:3px;color:#ff4500">M</span><svg style="top:3px" width="10" height="10" fill="#ff4500"><use href="#ad"/></svg>
<span class="l" style="top:17px;color:#ff4500">S</span><svg style="top:17px" width="10" height="10" fill="#ff4500"><use href="#ad"/></svg>
<span class="n" style="color:#4646ff">2</span>
</div>
<div class="cell" style="left:112px;top:112px;">
<i style="left:0;top:0;width:25px;height:15px;background:#dcdba0"></i>
<i style="left:0;top:15px;width:25px;height:16px;background:#dcdba0"></i>
<i style="left:25px;top:0;width:24px;height:31px;background:#34b234"></i>
<span class="l" style="top:3px;color:#ff4500">S</span><svg style="top:3px" width="10" height="10" fill="#ff4500"><use href="#ad"/></svg>
<span class="l" style="top:17px;color:#ff4500">M</span><svg style="top:17px" width="10" height="10" fill="#ff4500"><use href="#ad"/></svg>
<span class="n" style="color:#e0506e">7</span>
<i style="left:0;top:0;width:47px;height:29px;border:1.3px solid #0a14f0;box-sizing:border-box;width:49px;height:31px"></i>
</div>
<div class="cell" style="left:162px;top:112px;">
<i style="left:0;top:0;width:25px;height:15px;background:#ffffcc"></i>
<i style="left:0;top:15px;width:25px;height:16px;background:#ffffcc"></i>
<i style="left:25px;top:0;width:24px;height:31px;background:#ffffcc"></i>
<span class="l" style="top:3px;color:#ff4500">S</span><svg style="top:3px" width="10" height="10" fill="#ff4500"><use href="#ad"/></svg>
<span class="l" style="top:17px;color:#ff4500">M</span><svg style="top:17px" width="10" height="10" fill="#ff4500"><use href="#ad"/></svg>
<span class="n" style="color:#e0506e">3</span>
</div>
<div class="cell" style="left:212px;top:112px;">
<i style="left:0;top:0;width:25px;height:15px;background:#ffffcc"></i>
<i style="left:0;top:15px;width:25px;height:16px;background:#ffffcc"></i>
<i style="left:25px;top:0;width:24px;height:31px;background:#ffffcc"></i>
<span class="l" style="top:3px;color:#00aa00">M</span><svg style="top:4px" width="10" height="10" fill="#00aa00"><use href="#au"/></svg>
<span class="l" style="top:17px;color:#00aa00">S</span><svg style="top:18px" width="10" height="10" fill="#00aa00"><use href="#au"/></svg>
<span class="n" style="color:#4646ff">9</span>
</div>
<div class="cell" style="left:262px;top:112px;">
<i style="left:0;top:0;width:25px;height:15px;background:#f0f0fc"></i>
<i style="left:0;top:15px;width:25px;height:16px;background:#f0f0fc"></i>
<i style="left:25px;top:0;width:24px;height:31px;background:#f0f0fc"></i>
<span class="l" style="top:3px;color:#ff4500">S</span><svg style="top:3px" width="10" height="10" fill="#ff4500"><use href="#ad"/></svg>
<span class="l" style="top:17px;color:#ff4500">M</span><svg style="top:17px" width="10" height="10" fill="#ff4500"><use href="#ad"/></svg>
<span class="n" style="color:#e0506e">8</span>
</div>
<div class="lab" style="top:144px;color:#fff">EURJPY</div>
<div class="cell" style="left:62px;top:144px;">
<i style="left:0;top:0;width:25px;height:15px;background:#f0f0fc"></i>
<i style="left:0;top:15px;width:25px;height:16px;background:#f0f0fc"></i>
<i style="left:25px;top:0;width:24px;height:31px;background:#f0f0fc"></i>
<span class="l" style="top:3px;color:#ff4500">S</span><svg style="top:3px" width="10" height="10" fill="#ff4500"><use href="#ad"/></svg>
<span class="l" style="top:17px;color:#ff4500">M</span><svg style="top:17px" width="10" height="10" fill="#ff4500"><use href="#ad"/></svg>
<span class="n" style="color:#e0506e">13</span>
</div>
<div class="cell" style="left:112px;top:144px;">
<i style="left:0;top:0;width:25px;height:15px;background:#f0f0fc"></i>
<i style="left:0;top:15px;width:25px;height:16px;background:#f0f0fc"></i>
<i style="left:25px;top:0;width:24px;height:31px;background:#ffffcc"></i>
<span class="l" style="top:3px;color:#00aa00">M</span><svg style="top:4px" width="10" height="10" fill="#00aa00"><use href="#au"/></svg>
<span class="l" style="top:17px;color:#00aa00">S</span><svg style="top:18px" width="10" height="10" fill="#00aa00"><use href="#au"/></svg>
<span class="n" style="color:#4646ff">29</span>
</div>
<div class="cell" style="left:162px;top:144px;">
<i style="left:0;top:0;width:25px;height:15px;background:#f0f0fc"></i>
<i style="left:0;top:15px;width:25px;height:16px;background:#f0f0fc"></i>
<i style="left:25px;top:0;width:24px;height:31px;background:#ffffcc"></i>
<span class="l" style="top:3px;color:#00aa00">M</span><svg style="top:4px" width="10" height="10" fill="#00aa00"><use href="#au"/></svg>
<span class="l" style="top:17px;color:#00aa00">S</span><svg style="top:18px" width="10" height="10" fill="#00aa00"><use href="#au"/></svg>
<span class="n" style="color:#4646ff">20</span>
</div>
<div class="cell" style="left:212px;top:144px;">
<i style="left:0;top:0;width:25px;height:15px;background:#f0f0fc"></i>
<i style="left:0;top:15px;width:25px;height:16px;background:#f0f0fc"></i>
<i style="left:25px;top:0;width:24px;height:31px;background:#ffffcc"></i>
<span class="l" style="top:3px;color:#00aa00">M</span><svg style="top:4px" width="10" height="10" fill="#00aa00"><use href="#au"/></svg>
<span class="l" style="top:17px;color:#00aa00">S</span><svg style="top:18px" width="10" height="10" fill="#00aa00"><use href="#au"/></svg>
<span class="n" style="color:#4646ff">3</span>
</div>
<div class="cell" style="left:262px;top:144px;">
<i style="left:0;top:0;width:25px;height:15px;background:#f0f0fc"></i>
<i style="left:0;top:15px;width:25px;height:16px;background:#f0f0fc"></i>
<i style="left:25px;top:0;width:24px;height:31px;background:#ffffcc"></i>
<span class="l" style="top:3px;color:#00aa00">M</span><svg style="top:4px" width="10" height="10" fill="#00aa00"><use href="#au"/></svg>
<span class="l" style="top:17px;color:#00aa00">S</span><svg style="top:18px" width="10" height="10" fill="#00aa00"><use href="#au"/></svg>
<span class="n" style="color:#4646ff">9</span>
</div>
<div class="lab" style="top:176px;color:#fff">EURUSD</div>
<div class="cell" style="left:62px;top:176px;">
<i style="left:0;top:0;width:25px;height:15px;background:#f0f0fc"></i>
<i style="left:0;top:15px;width:25px;height:16px;background:#f0f0fc"></i>
<i style="left:25px;top:0;width:24px;height:31px;background:#ffffcc"></i>
<span class="l" style="top:3px;color:#ff4500">M</span><svg style="top:3px" width="10" height="10" fill="#ff4500"><use href="#ad"/></svg>
<span class="l" style="top:17px;color:#00aa00">S</span><svg style="top:18px" width="10" height="10" fill="#00aa00"><use href="#au"/></svg>
<span class="n" style="color:#4646ff">23</span>
</div>
<div class="cell" style="left:112px;top:176px;">
<i style="left:0;top:0;width:25px;height:15px;background:#ffffcc"></i>
<i style="left:0;top:15px;width:25px;height:16px;background:#ffffcc"></i>
<i style="left:25px;top:0;width:24px;height:31px;background:#ffffcc"></i>
<span class="l" style="top:3px;color:#00aa00">M</span><svg style="top:4px" width="10" height="10" fill="#00aa00"><use href="#au"/></svg>
<span class="l" style="top:17px;color:#00aa00">S</span><svg style="top:18px" width="10" height="10" fill="#00aa00"><use href="#au"/></svg>
<span class="n" style="color:#4646ff">11</span>
</div>
<div class="cell" style="left:162px;top:176px;">
<i style="left:0;top:0;width:25px;height:15px;background:#ffffcc"></i>
<i style="left:0;top:15px;width:25px;height:16px;background:#ffffcc"></i>
<i style="left:25px;top:0;width:24px;height:31px;background:#ffffcc"></i>
<span class="l" style="top:3px;color:#00aa00">M</span><svg style="top:4px" width="10" height="10" fill="#00aa00"><use href="#au"/></svg>
<span class="l" style="top:17px;color:#00aa00">S</span><svg style="top:18px" width="10" height="10" fill="#00aa00"><use href="#au"/></svg>
<span class="n" style="color:#4646ff">2</span>
</div>
<div class="cell" style="left:212px;top:176px;">
<i style="left:0;top:0;width:25px;height:15px;background:#f0f0fc"></i>
<i style="left:0;top:15px;width:25px;height:16px;background:#f0f0fc"></i>
<i style="left:25px;top:0;width:24px;height:31px;background:#ffffcc"></i>
<span class="l" style="top:3px;color:#00aa00">M</span><svg style="top:4px" width="10" height="10" fill="#00aa00"><use href="#au"/></svg>
<span class="l" style="top:17px;color:#00aa00">S</span><svg style="top:18px" width="10" height="10" fill="#00aa00"><use href="#au"/></svg>
<span class="n" style="color:#4646ff">5</span>
</div>
<div class="cell" style="left:262px;top:176px;">
<i style="left:0;top:0;width:25px;height:15px;background:#ffffcc"></i>
<i style="left:0;top:15px;width:25px;height:16px;background:#ffffcc"></i>
<i style="left:25px;top:0;width:24px;height:31px;background:#ffffcc"></i>
<span class="l" style="top:3px;color:#00aa00">M</span><svg style="top:4px" width="10" height="10" fill="#00aa00"><use href="#au"/></svg>
<span class="l" style="top:17px;color:#00aa00">S</span><svg style="top:18px" width="10" height="10" fill="#00aa00"><use href="#au"/></svg>
<span class="n" style="color:#4646ff">6</span>
</div>
<div class="lab" style="top:208px;color:#fff">GBPJPY</div>
<div class="cell" style="left:62px;top:208px;">
<i style="left:0;top:0;width:25px;height:15px;background:#f0f0fc"></i>
<i style="left:0;top:15px;width:25px;height:16px;background:#f0f0fc"></i>
<i style="left:25px;top:0;width:24px;height:31px;background:#f0f0fc"></i>
<span class="l" style="top:3px;color:#ff4500">S</span><svg style="top:3px" width="10" height="10" fill="#ff4500"><use href="#ad"/></svg>
<span class="l" style="top:17px;color:#ff4500">M</span><svg style="top:17px" width="10" height="10" fill="#ff4500"><use href="#ad"/></svg>
<span class="n" style="color:#e0506e">12</span>
</div>
<div class="cell" style="left:112px;top:208px;">
<i style="left:0;top:0;width:25px;height:15px;background:#f0f0fc"></i>
<i style="left:0;top:15px;width:25px;height:16px;background:#f0f0fc"></i>
<i style="left:25px;top:0;width:24px;height:31px;background:#ffffcc"></i>
<span class="l" style="top:3px;color:#00aa00">M</span><svg style="top:4px" width="10" height="10" fill="#00aa00"><use href="#au"/></svg>
<span class="l" style="top:17px;color:#00aa00">S</span><svg style="top:18px" width="10" height="10" fill="#00aa00"><use href="#au"/></svg>
<span class="n" style="color:#4646ff">35</span>
</div>
<div class="cell" style="left:162px;top:208px;">
<i style="left:0;top:0;width:25px;height:15px;background:#f0f0fc"></i>
<i style="left:0;top:15px;width:25px;height:16px;background:#f0f0fc"></i>
<i style="left:25px;top:0;width:24px;height:31px;background:#ffffcc"></i>
<span class="l" style="top:3px;color:#00aa00">M</span><svg style="top:4px" width="10" height="10" fill="#00aa00"><use href="#au"/></svg>
<span class="l" style="top:17px;color:#00aa00">S</span><svg style="top:18px" width="10" height="10" fill="#00aa00"><use href="#au"/></svg>
<span class="n" style="color:#4646ff">12</span>
</div>
<div class="cell" style="left:212px;top:208px;">
<i style="left:0;top:0;width:25px;height:15px;background:#f0f0fc"></i>
<i style="left:0;top:15px;width:25px;height:16px;background:#f0f0fc"></i>
<i style="left:25px;top:0;width:24px;height:31px;background:#ffa43c"></i>
<span class="l" style="top:3px;color:#00aa00">M</span><svg style="top:4px" width="10" height="10" fill="#00aa00"><use href="#au"/></svg>
<span class="l" style="top:17px;color:#00aa00">S</span><svg style="top:18px" width="10" height="10" fill="#00aa00"><use href="#au"/></svg>
<span class="n" style="color:#4646ff">1</span>
</div>
<div class="cell" style="left:262px;top:208px;">
<i style="left:0;top:0;width:25px;height:15px;background:#f0f0fc"></i>
<i style="left:0;top:15px;width:25px;height:16px;background:#ffffcc"></i>
<i style="left:25px;top:0;width:24px;height:31px;background:#ffffcc"></i>
<span class="l" style="top:3px;color:#00aa00">M</span><svg style="top:4px" width="10" height="10" fill="#00aa00"><use href="#au"/></svg>
<span class="l" style="top:17px;color:#00aa00">S</span><svg style="top:18px" width="10" height="10" fill="#00aa00"><use href="#au"/></svg>
<span class="n" style="color:#4646ff">7</span>
</div>
<div class="lab" style="top:240px;color:#fff">GBPUSD</div>
<div class="cell" style="left:62px;top:240px;">
<i style="left:0;top:0;width:25px;height:15px;background:#f0f0fc"></i>
<i style="left:0;top:15px;width:25px;height:16px;background:#f0f0fc"></i>
<i style="left:25px;top:0;width:24px;height:31px;background:#ffffcc"></i>
<span class="l" style="top:3px;color:#ff4500">M</span><svg style="top:3px" width="10" height="10" fill="#ff4500"><use href="#ad"/></svg>
<span class="l" style="top:17px;color:#00aa00">S</span><svg style="top:18px" width="10" height="10" fill="#00aa00"><use href="#au"/></svg>
<span class="n" style="color:#4646ff">22</span>
</div>
<div class="cell" style="left:112px;top:240px;">
<i style="left:0;top:0;width:25px;height:15px;background:#f0f0fc"></i>
<i style="left:0;top:15px;width:25px;height:16px;background:#ffffcc"></i>
<i style="left:25px;top:0;width:24px;height:31px;background:#ffffcc"></i>
<span class="l" style="top:3px;color:#00aa00">M</span><svg style="top:4px" width="10" height="10" fill="#00aa00"><use href="#au"/></svg>
<span class="l" style="top:17px;color:#00aa00">S</span><svg style="top:18px" width="10" height="10" fill="#00aa00"><use href="#au"/></svg>
<span class="n" style="color:#4646ff">8</span>
</div>
<div class="cell" style="left:162px;top:240px;">
<i style="left:0;top:0;width:25px;height:15px;background:#ffffcc"></i>
<i style="left:0;top:15px;width:25px;height:16px;background:#ffffcc"></i>
<i style="left:25px;top:0;width:24px;height:31px;background:#ffffcc"></i>
<span class="l" style="top:3px;color:#00aa00">M</span><svg style="top:4px" width="10" height="10" fill="#00aa00"><use href="#au"/></svg>
<span class="l" style="top:17px;color:#00aa00">S</span><svg style="top:18px" width="10" height="10" fill="#00aa00"><use href="#au"/></svg>
<span class="n" style="color:#4646ff">3</span>
</div>
<div class="cell" style="left:212px;top:240px;">
<i style="left:0;top:0;width:25px;height:15px;background:#f0f0fc"></i>
<i style="left:0;top:15px;width:25px;height:16px;background:#ffffcc"></i>
<i style="left:25px;top:0;width:24px;height:31px;background:#f0f0fc"></i>
<span class="l" style="top:3px;color:#ff4500">S</span><svg style="top:3px" width="10" height="10" fill="#ff4500"><use href="#ad"/></svg>
<span class="l" style="top:17px;color:#ff4500">M</span><svg style="top:17px" width="10" height="10" fill="#ff4500"><use href="#ad"/></svg>
<span class="n" style="color:#e0506e">8</span>
</div>
<div class="cell" style="left:262px;top:240px;">
<i style="left:0;top:0;width:25px;height:15px;background:#f0f0fc"></i>
<i style="left:0;top:15px;width:25px;height:16px;background:#f0f0fc"></i>
<i style="left:25px;top:0;width:24px;height:31px;background:#f0f0fc"></i>
<span class="l" style="top:3px;color:#00aa00">S</span><svg style="top:4px" width="10" height="10" fill="#00aa00"><use href="#au"/></svg>
<span class="l" style="top:17px;color:#ff4500">M</span><svg style="top:17px" width="10" height="10" fill="#ff4500"><use href="#ad"/></svg>
<span class="n" style="color:#e0506e">0</span>
</div>
<div class="lab" style="top:272px;color:#fff">NZDUSD</div>
<div class="cell" style="left:62px;top:272px;">
<i style="left:0;top:0;width:25px;height:15px;background:#ffffcc"></i>
<i style="left:0;top:15px;width:25px;height:16px;background:#ffffcc"></i>
<i style="left:25px;top:0;width:24px;height:31px;background:#ffffcc"></i>
<span class="l" style="top:3px;color:#00aa00">M</span><svg style="top:4px" width="10" height="10" fill="#00aa00"><use href="#au"/></svg>
<span class="l" style="top:17px;color:#00aa00">S</span><svg style="top:18px" width="10" height="10" fill="#00aa00"><use href="#au"/></svg>
<span class="n" style="color:#4646ff">4</span>
</div>
<div class="cell" style="left:112px;top:272px;">
<i style="left:0;top:0;width:25px;height:15px;background:#ffffcc"></i>
<i style="left:0;top:15px;width:25px;height:16px;background:#ffffcc"></i>
<i style="left:25px;top:0;width:24px;height:31px;background:#f0f0fc"></i>
<span class="l" style="top:3px;color:#ff4500">S</span><svg style="top:3px" width="10" height="10" fill="#ff4500"><use href="#ad"/></svg>
<span class="l" style="top:17px;color:#ff4500">M</span><svg style="top:17px" width="10" height="10" fill="#ff4500"><use href="#ad"/></svg>
<span class="n" style="color:#e0506e">14</span>
</div>
<div class="cell" style="left:162px;top:272px;">
<i style="left:0;top:0;width:25px;height:15px;background:#ffffcc"></i>
<i style="left:0;top:15px;width:25px;height:16px;background:#ffffcc"></i>
<i style="left:25px;top:0;width:24px;height:31px;background:#f0f0fc"></i>
<span class="l" style="top:3px;color:#ff4500">S</span><svg style="top:3px" width="10" height="10" fill="#ff4500"><use href="#ad"/></svg>
<span class="l" style="top:17px;color:#ff4500">M</span><svg style="top:17px" width="10" height="10" fill="#ff4500"><use href="#ad"/></svg>
<span class="n" style="color:#e0506e">5</span>
</div>
<div class="cell" style="left:212px;top:272px;">
<i style="left:0;top:0;width:25px;height:15px;background:#ffffcc"></i>
<i style="left:0;top:15px;width:25px;height:16px;background:#ffffcc"></i>
<i style="left:25px;top:0;width:24px;height:31px;background:#ffffcc"></i>
<span class="l" style="top:3px;color:#ff4500">M</span><svg style="top:3px" width="10" height="10" fill="#ff4500"><use href="#ad"/></svg>
<span class="l" style="top:17px;color:#ff4500">S</span><svg style="top:17px" width="10" height="10" fill="#ff4500"><use href="#ad"/></svg>
<span class="n" style="color:#4646ff">2</span>
</div>
<div class="cell" style="left:262px;top:272px;">
<i style="left:0;top:0;width:25px;height:15px;background:#f0f0fc"></i>
<i style="left:0;top:15px;width:25px;height:16px;background:#f0f0fc"></i>
<i style="left:25px;top:0;width:24px;height:31px;background:#f0f0fc"></i>
<span class="l" style="top:3px;color:#00aa00">S</span><svg style="top:4px" width="10" height="10" fill="#00aa00"><use href="#au"/></svg>
<span class="l" style="top:17px;color:#ff4500">M</span><svg style="top:17px" width="10" height="10" fill="#ff4500"><use href="#ad"/></svg>
<span class="n" style="color:#e0506e">1</span>
</div>
<div class="lab" style="top:304px;color:#fff">USDCAD</div>
<div class="cell" style="left:62px;top:304px;">
<i style="left:0;top:0;width:25px;height:15px;background:#f0f0fc"></i>
<i style="left:0;top:15px;width:25px;height:16px;background:#f0f0fc"></i>
<i style="left:25px;top:0;width:24px;height:31px;background:#f0f0fc"></i>
<span class="l" style="top:3px;color:#ff4500">S</span><svg style="top:3px" width="10" height="10" fill="#ff4500"><use href="#ad"/></svg>
<span class="l" style="top:17px;color:#00aa00">M</span><svg style="top:18px" width="10" height="10" fill="#00aa00"><use href="#au"/></svg>
<span class="n" style="color:#e0506e">5</span>
</div>
<div class="cell" style="left:112px;top:304px;">
<i style="left:0;top:0;width:25px;height:15px;background:#f0f0fc"></i>
<i style="left:0;top:15px;width:25px;height:16px;background:#f0f0fc"></i>
<i style="left:25px;top:0;width:24px;height:31px;background:#ffffcc"></i>
<span class="l" style="top:3px;color:#00aa00">M</span><svg style="top:4px" width="10" height="10" fill="#00aa00"><use href="#au"/></svg>
<span class="l" style="top:17px;color:#00aa00">S</span><svg style="top:18px" width="10" height="10" fill="#00aa00"><use href="#au"/></svg>
<span class="n" style="color:#4646ff">27</span>
</div>
<div class="cell" style="left:162px;top:304px;">
<i style="left:0;top:0;width:25px;height:15px;background:#ffffcc"></i>
<i style="left:0;top:15px;width:25px;height:16px;background:#ffffcc"></i>
<i style="left:25px;top:0;width:24px;height:31px;background:#ffffcc"></i>
<span class="l" style="top:3px;color:#00aa00">M</span><svg style="top:4px" width="10" height="10" fill="#00aa00"><use href="#au"/></svg>
<span class="l" style="top:17px;color:#00aa00">S</span><svg style="top:18px" width="10" height="10" fill="#00aa00"><use href="#au"/></svg>
<span class="n" style="color:#4646ff">8</span>
</div>
<div class="cell" style="left:212px;top:304px;">
<i style="left:0;top:0;width:25px;height:15px;background:#ffffcc"></i>
<i style="left:0;top:15px;width:25px;height:16px;background:#ffffcc"></i>
<i style="left:25px;top:0;width:24px;height:31px;background:#72d672"></i>
<span class="l" style="top:3px;color:#ff4500">S</span><svg style="top:3px" width="10" height="10" fill="#ff4500"><use href="#ad"/></svg>
<span class="l" style="top:17px;color:#00aa00">M</span><svg style="top:18px" width="10" height="10" fill="#00aa00"><use href="#au"/></svg>
<span class="n" style="color:#e0506e">17</span>
</div>
<div class="cell" style="left:262px;top:304px;">
<i style="left:0;top:0;width:25px;height:15px;background:#ffffcc"></i>
<i style="left:0;top:15px;width:25px;height:16px;background:#ffffcc"></i>
<i style="left:25px;top:0;width:24px;height:31px;background:#ffffcc"></i>
<span class="l" style="top:3px;color:#00aa00">M</span><svg style="top:4px" width="10" height="10" fill="#00aa00"><use href="#au"/></svg>
<span class="l" style="top:17px;color:#00aa00">S</span><svg style="top:18px" width="10" height="10" fill="#00aa00"><use href="#au"/></svg>
<span class="n" style="color:#4646ff">4</span>
</div>
<div class="lab" style="top:336px;color:#fff">USDCHF</div>
<div class="cell" style="left:62px;top:336px;">
<i style="left:0;top:0;width:25px;height:15px;background:#ffffcc"></i>
<i style="left:0;top:15px;width:25px;height:16px;background:#ffffcc"></i>
<i style="left:25px;top:0;width:24px;height:31px;background:#ffffcc"></i>
<span class="l" style="top:3px;color:#00aa00">M</span><svg style="top:4px" width="10" height="10" fill="#00aa00"><use href="#au"/></svg>
<span class="l" style="top:17px;color:#00aa00">S</span><svg style="top:18px" width="10" height="10" fill="#00aa00"><use href="#au"/></svg>
<span class="n" style="color:#4646ff">0</span>
</div>
<div class="cell" style="left:112px;top:336px;">
<i style="left:0;top:0;width:25px;height:15px;background:#f0f0fc"></i>
<i style="left:0;top:15px;width:25px;height:16px;background:#f0f0fc"></i>
<i style="left:25px;top:0;width:24px;height:31px;background:#f0f0fc"></i>
<span class="l" style="top:3px;color:#ff4500">S</span><svg style="top:3px" width="10" height="10" fill="#ff4500"><use href="#ad"/></svg>
<span class="l" style="top:17px;color:#00aa00">M</span><svg style="top:18px" width="10" height="10" fill="#00aa00"><use href="#au"/></svg>
<span class="n" style="color:#e0506e">7</span>
</div>
<div class="cell" style="left:162px;top:336px;">
<i style="left:0;top:0;width:25px;height:15px;background:#f0f0fc"></i>
<i style="left:0;top:15px;width:25px;height:16px;background:#f0f0fc"></i>
<i style="left:25px;top:0;width:24px;height:31px;background:#f0f0fc"></i>
<span class="l" style="top:3px;color:#00aa00">S</span><svg style="top:4px" width="10" height="10" fill="#00aa00"><use href="#au"/></svg>
<span class="l" style="top:17px;color:#00aa00">M</span><svg style="top:18px" width="10" height="10" fill="#00aa00"><use href="#au"/></svg>
<span class="n" style="color:#e0506e">1</span>
</div>
<div class="cell" style="left:212px;top:336px;">
<i style="left:0;top:0;width:25px;height:15px;background:#f0f0fc"></i>
<i style="left:0;top:15px;width:25px;height:16px;background:#f0f0fc"></i>
<i style="left:25px;top:0;width:24px;height:31px;background:#ffffcc"></i>
<span class="l" style="top:3px;color:#00aa00">M</span><svg style="top:4px" width="10" height="10" fill="#00aa00"><use href="#au"/></svg>
<span class="l" style="top:17px;color:#00aa00">S</span><svg style="top:18px" width="10" height="10" fill="#00aa00"><use href="#au"/></svg>
<span class="n" style="color:#4646ff">4</span>
</div>
<div class="cell" style="left:262px;top:336px;">
<i style="left:0;top:0;width:25px;height:15px;background:#ffffcc"></i>
<i style="left:0;top:15px;width:25px;height:16px;background:#ffffcc"></i>
<i style="left:25px;top:0;width:24px;height:31px;background:#ffffcc"></i>
<span class="l" style="top:3px;color:#00aa00">M</span><svg style="top:4px" width="10" height="10" fill="#00aa00"><use href="#au"/></svg>
<span class="l" style="top:17px;color:#00aa00">S</span><svg style="top:18px" width="10" height="10" fill="#00aa00"><use href="#au"/></svg>
<span class="n" style="color:#4646ff">6</span>
</div>
<div class="lab" style="top:368px;color:#fff">USDJPY</div>
<div class="cell" style="left:62px;top:368px;">
<i style="left:0;top:0;width:25px;height:15px;background:#f0f0fc"></i>
<i style="left:0;top:15px;width:25px;height:16px;background:#f0f0fc"></i>
<i style="left:25px;top:0;width:24px;height:31px;background:#f0f0fc"></i>
<span class="l" style="top:3px;color:#ff4500">S</span><svg style="top:3px" width="10" height="10" fill="#ff4500"><use href="#ad"/></svg>
<span class="l" style="top:17px;color:#00aa00">M</span><svg style="top:18px" width="10" height="10" fill="#00aa00"><use href="#au"/></svg>
<span class="n" style="color:#e0506e">15</span>
</div>
<div class="cell" style="left:112px;top:368px;">
<i style="left:0;top:0;width:25px;height:15px;background:#f0f0fc"></i>
<i style="left:0;top:15px;width:25px;height:16px;background:#f0f0fc"></i>
<i style="left:25px;top:0;width:24px;height:31px;background:#f0f0fc"></i>
<span class="l" style="top:3px;color:#ff4500">S</span><svg style="top:3px" width="10" height="10" fill="#ff4500"><use href="#ad"/></svg>
<span class="l" style="top:17px;color:#00aa00">M</span><svg style="top:18px" width="10" height="10" fill="#00aa00"><use href="#au"/></svg>
<span class="n" style="color:#e0506e">4</span>
</div>
<div class="cell" style="left:162px;top:368px;">
<i style="left:0;top:0;width:25px;height:15px;background:#f0f0fc"></i>
<i style="left:0;top:15px;width:25px;height:16px;background:#f0f0fc"></i>
<i style="left:25px;top:0;width:24px;height:31px;background:#f0f0fc"></i>
<span class="l" style="top:3px;color:#00aa00">M</span><svg style="top:4px" width="10" height="10" fill="#00aa00"><use href="#au"/></svg>
<span class="l" style="top:17px;color:#00aa00">S</span><svg style="top:18px" width="10" height="10" fill="#00aa00"><use href="#au"/></svg>
<span class="n" style="color:#4646ff">15</span>
</div>
<div class="cell" style="left:212px;top:368px;">
<i style="left:0;top:0;width:25px;height:15px;background:#f0f0fc"></i>
<i style="left:0;top:15px;width:25px;height:16px;background:#f0f0fc"></i>
<i style="left:25px;top:0;width:24px;height:31px;background:#ffa43c"></i>
<span class="l" style="top:3px;color:#00aa00">M</span><svg style="top:4px" width="10" height="10" fill="#00aa00"><use href="#au"/></svg>
<span class="l" style="top:17px;color:#00aa00">S</span><svg style="top:18px" width="10" height="10" fill="#00aa00"><use href="#au"/></svg>
<span class="n" style="color:#4646ff">6</span>
</div>
<div class="cell" style="left:262px;top:368px;">
<i style="left:0;top:0;width:25px;height:15px;background:#ffffcc"></i>
<i style="left:0;top:15px;width:25px;height:16px;background:#ffffcc"></i>
<i style="left:25px;top:0;width:24px;height:31px;background:#ffffcc"></i>
<span class="l" style="top:3px;color:#00aa00">M</span><svg style="top:4px" width="10" height="10" fill="#00aa00"><use href="#au"/></svg>
<span class="l" style="top:17px;color:#00aa00">S</span><svg style="top:18px" width="10" height="10" fill="#00aa00"><use href="#au"/></svg>
<span class="n" style="color:#4646ff">4</span>
</div>
<div class="abs" style="left:0;top:228px;width:62px;height:1px;background:rgba(255,255,255,0.22)"></div>
</div>
<div id="popup">
<svg class="abs" style="left:-1px;top:-1px" width="302" height="170" viewBox="500 322 302 170">
<g shape-rendering="crispEdges" fill="#b4b4b4">
<rect x="501" y="444" width="2" height="2"/>
<rect x="505" y="446" width="2" height="9"/>
<rect x="509" y="446" width="2" height="10"/>
<rect x="513" y="446" width="2" height="7"/>
<rect x="517" y="444" width="2" height="2"/>
<rect x="521" y="440" width="2" height="6"/>
<rect x="525" y="438" width="2" height="8"/>
<rect x="529" y="436" width="2" height="10"/>
<rect x="533" y="433" width="2" height="13"/>
<rect x="537" y="433" width="2" height="13"/>
<rect x="541" y="430" width="2" height="16"/>
<rect x="545" y="428" width="2" height="18"/>
<rect x="549" y="428" width="2" height="18"/>
<rect x="553" y="428" width="2" height="18"/>
<rect x="557" y="426" width="2" height="20"/>
<rect x="561" y="421" width="2" height="25"/>
<rect x="565" y="420" width="2" height="26"/>
<rect x="569" y="423" width="2" height="23"/>
<rect x="573" y="424" width="2" height="22"/>
<rect x="577" y="428" width="2" height="18"/>
<rect x="581" y="426" width="2" height="20"/>
<rect x="585" y="423" width="2" height="23"/>
<rect x="589" y="422" width="2" height="24"/>
<rect x="593" y="420" width="2" height="26"/>
<rect x="597" y="416" width="2" height="30"/>
<rect x="601" y="405" width="2" height="41"/>
<rect x="605" y="413" width="2" height="33"/>
<rect x="609" y="431" width="2" height="15"/>
<rect x="613" y="446" width="2" height="11"/>
<rect x="617" y="446" width="2" height="25"/>
<rect x="621" y="446" width="2" height="28"/>
<rect x="625" y="446" width="2" height="31"/>
<rect x="629" y="446" width="2" height="33"/>
<rect x="633" y="446" width="2" height="36"/>
<rect x="637" y="446" width="2" height="33"/>
<rect x="641" y="446" width="2" height="28"/>
<rect x="645" y="446" width="2" height="28"/>
<rect x="649" y="446" width="2" height="29"/>
<rect x="653" y="446" width="2" height="33"/>
<rect x="657" y="446" width="2" height="34"/>
<rect x="661" y="446" width="2" height="28"/>
<rect x="665" y="446" width="2" height="24"/>
<rect x="669" y="446" width="2" height="24"/>
<rect x="673" y="446" width="2" height="17"/>
<rect x="677" y="446" width="2" height="12"/>
<rect x="681" y="446" width="2" height="8"/>
<rect x="685" y="446" width="2" height="1"/>
<rect x="689" y="444" width="2" height="2"/>
<rect x="693" y="446" width="2" height="1"/>
<rect x="697" y="446" width="2" height="1"/>
<rect x="701" y="446" width="2" height="1"/>
<rect x="705" y="446" width="2" height="1"/>
<rect x="709" y="446" width="2" height="1"/>
<rect x="713" y="438" width="2" height="8"/>
<rect x="717" y="433" width="2" height="13"/>
<rect x="721" y="433" width="2" height="13"/>
<rect x="725" y="434" width="2" height="12"/>
<rect x="729" y="433" width="2" height="13"/>
<rect x="733" y="433" width="2" height="13"/>
<rect x="737" y="433" width="2" height="13"/>
<rect x="741" y="438" width="2" height="8"/>
<rect x="745" y="443" width="2" height="3"/>
<rect x="749" y="445" width="2" height="1"/>
<rect x="753" y="446" width="2" height="4"/>
<rect x="757" y="446" width="2" height="5"/>
<rect x="761" y="446" width="2" height="7"/>
<rect x="765" y="446" width="2" height="8"/>
<rect x="769" y="446" width="2" height="9"/>
<rect x="773" y="446" width="2" height="7"/>
<rect x="777" y="446" width="2" height="7"/>
</g>
<polyline points="500.5,471.8 508.0,473.0 517.0,473.6 528.0,471.8 536.8,469.2 552.0,452.0 567.5,432.3 583.0,410.3 596.0,390.5 607.0,373.0 613.7,369.0 620.3,369.0 626.9,374.0 632.4,381.7 640.0,398.0 646.6,412.4 653.0,427.8 662.0,445.4 670.7,458.6 679.5,468.4 688.3,472.4 699.3,474.4 708.0,474.4 716.9,470.6 727.9,464.0 738.8,456.8 747.6,453.7 756.4,453.0 765.2,455.3 771.8,458.6 776.0,461.9" fill="none" stroke="#ff0000" stroke-width="1" stroke-dasharray="2.6,2.4"/>
<polyline points="500.5,468.5 503.8,476.0 508.2,482.4 512.6,480.6 517.0,473.0 525.8,464.2 533.5,457.0 537.9,455.4 545.5,443.3 554.3,432.3 561.0,419.0 565.3,411.4 572.0,406.0 577.4,402.6 583.0,393.8 591.7,375.0 597.2,362.0 601.6,344.0 604.9,344.0 608.2,351.0 611.5,368.5 614.8,384.0 618.0,392.7 626.9,406.0 636.8,423.5 640.0,425.6 643.3,430.0 646.6,441.0 651.0,452.0 656.5,465.0 662.0,469.5 668.5,474.0 674.0,477.2 680.6,476.0 685.0,471.7 689.4,471.3 695.0,473.5 701.5,474.4 708.0,474.4 711.4,468.4 715.8,460.8 721.3,456.4 727.9,454.6 737.7,446.0 742.0,449.8 748.7,452.4 753.0,458.0 758.6,461.0 763.0,463.5 767.4,469.7 773.3,467.0 778.0,469.7" fill="none" stroke="#008b8b" stroke-width="1"/>
<line x1="657.6" y1="466.3" x2="700" y2="475" stroke="#0000ff" stroke-width="0.9" stroke-dasharray="3,3"/>
<line x1="706" y1="475.3" x2="766" y2="468" stroke="#008000" stroke-width="0.9"/>
<use href="#au" x="697.5" y="470.5" width="9.5" height="9.5" fill="#0000ff"/>
<use href="#au" x="762" y="464" width="9" height="9" fill="#008000"/>
<use href="#au" x="501.5" y="475" width="8.5" height="8.5" fill="#008000"/>
<g font-family='"Liberation Sans", Arial, sans-serif' font-size="9.6" fill="#000"><text x="506.3" y="334" textLength="61.7">EURGBP, M30</text><text x="642.2" y="334" textLength="154.2">MACD(12,26,9) -0.000167 -0.000117</text></g>
</svg></div>
<div id="tip">
<svg class="abs" style="left:0;top:0" width="150" height="77"><g font-family='"Liberation Sans", Arial, sans-serif' font-size="12" fill="#575757">
<text x="5.5" y="12.8" textLength="68.2">EURGBP,M30</text>
<text x="5.5" y="27.7" textLength="126">Lines crossed 7 bars ago</text>
<text x="5.5" y="42.6" textLength="113.2">Cross was below Zero</text>
<text x="5.5" y="57.5" textLength="104">MACD below Signal</text>
<text x="5.5" y="72.4" textLength="138.5">Regular Bullish divergence</text>
</g></svg>
</div>
<svg class="abs" style="left:804px;top:514px" width="14" height="22"><polygon points="0.5,0.5 0.5,16.5 4.2,13 7,19.2 9.6,18 6.9,12.2 11.8,12.2" fill="#fff" stroke="#000" stroke-width="1" stroke-linejoin="miter"/></svg>
</div>
<div class="dlg" style="left:1003px;width:504px">
<div class="title" style="left:7px">Custom Indicator - MACD_Dashboard</div>
<div class="gray"></div>
<div class="page" style="left:5px"></div>
<div class="tab" style="left:7px;width:42px">About</div>
<div class="tab" style="left:48px;width:53px">Common</div>
<div class="tab sel" style="left:100px;width:46px">Inputs</div>
<div class="tab" style="left:145px;width:41px">Colors</div>
<div class="tab" style="left:185px;width:69px">Visualization</div>
<div class="tbl" style="left:17px">
<div class="hdr"><span style="left:7px">Variable</span><span style="left:308.5px">Value</span></div>
<div class="vdiv" style="left:302px;"></div>
<div class="row" style="top:25px">
<svg class="ic" width="16" height="16"><use href="#i-ab"/></svg>
<span class="t">-    -   -- ---- MACD ---- --   -    -</span>
</div>
<div class="row g" style="top:45px">
<svg class="ic" width="16" height="16"><use href="#i-n"/></svg>
<span class="t">Fast MA period</span>
<span class="v" style="left:304px">12</span>
</div>
<div class="row" style="top:65px">
<svg class="ic" width="16" height="16"><use href="#i-n"/></svg>
<span class="t">Slow MA period</span>
<span class="v" style="left:304px">26</span>
</div>
<div class="row g" style="top:85px">
<svg class="ic" width="16" height="16"><use href="#i-n"/></svg>
<span class="t">Signal MA period</span>
<span class="v" style="left:304px">9</span>
</div>
<div class="row" style="top:105px">
<svg class="ic" width="16" height="16"><use href="#i-n"/></svg>
<span class="t">Applied price</span>
<span class="v" style="left:304px">Close price</span>
</div>
<div class="row g" style="top:125px">
<svg class="ic" width="16" height="16"><use href="#i-n"/></svg>
<span class="t">Fast MA Method</span>
<span class="v" style="left:304px">Exponential</span>
</div>
<div class="row" style="top:145px">
<svg class="ic" width="16" height="16"><use href="#i-n"/></svg>
<span class="t">Slow MA Method</span>
<span class="v" style="left:304px">Exponential</span>
</div>
<div class="row g" style="top:165px">
<svg class="ic" width="16" height="16"><use href="#i-n"/></svg>
<span class="t">Signal MA Method</span>
<span class="v" style="left:304px">Simple</span>
</div>
<div class="row" style="top:185px">
<svg class="ic" width="16" height="16"><use href="#i-n"/></svg>
<span class="t">Max bars to calculate (0-all bars)</span>
<span class="v" style="left:304px">500</span>
</div>
<div class="row sel" style="top:205px">
<svg class="ic" width="16" height="16"><use href="#i-n"/></svg>
<span class="t">Divergence. Method for finding</span>
</div>
<div class="row" style="top:225px">
<svg class="ic" width="16" height="16"><use href="#i-n"/></svg>
<span class="t">Divergence. Minimum bars to be visible in a cell</span>
</div>
<div class="row g" style="top:245px">
<svg class="ic" width="16" height="16"><use href="#i-n"/></svg>
<span class="t">Divergence. Depth</span>
</div>
<div class="row" style="top:265px">
<svg class="ic" width="16" height="16"><use href="#i-n"/></svg>
<span class="t">Divergence. Deviation</span>
</div>
<div class="row g" style="top:285px">
<svg class="ic" width="16" height="16"><use href="#i-n"/></svg>
<span class="t">Divergence. Backstep</span>
<span class="v" style="left:304px">3</span>
</div>
<div class="row" style="top:305px">
<svg class="ic" width="16" height="16"><use href="#i-ab"/></svg>
<span class="t">-    -   -- ---- Dashboard ---- --   -</span>
</div>
<div class="row g" style="top:325px">
<svg class="ic" width="16" height="16"><use href="#i-b"/></svg>
<span class="t">All calculation only on closed bars</span>
<span class="v" style="left:304px">false</span>
</div>
<div class="row" style="top:345px">
<svg class="ic" width="16" height="16"><use href="#i-n"/></svg>
<span class="t">Set of Pairs</span>
<span class="v" style="left:304px">Specified manually</span>
</div>
<div class="row g" style="top:365px">
<svg class="ic" width="16" height="16"><use href="#i-ab"/></svg>
<span class="t">Pairs (separated by a space or semicolon)</span>
<span class="v" style="left:304px">gbpusd eurusd usdjpy usdcad audusd</span>
</div>
<div class="row" style="top:385px">
<svg class="ic" width="16" height="16"><use href="#i-ab"/></svg>
<span class="t">Pairs (separated ONLY by a semicolon and have exact l...</span>
</div>
<div class="row g" style="top:405px">
<svg class="ic" width="16" height="16"><use href="#i-ab"/></svg>
<span class="t">Time Frames (separated by a space or semicolon)</span>
<span class="v" style="left:304px">H1 h4; m30;d1 M15</span>
</div>
<div class="row" style="top:425px">
<svg class="ic" width="16" height="16"><use href="#i-b"/></svg>
<span class="t">Sort pairs</span>
<span class="v" style="left:304px">true</span>
</div>
<div class="row g" style="top:445px">
<svg class="ic" width="16" height="16"><use href="#i-b"/></svg>
<span class="t">Clear the chart at startup</span>
<span class="v" style="left:304px">false</span>
</div>
<div class="row" style="top:465px">
<svg class="ic" width="16" height="16"><use href="#i-n"/></svg>
<span class="t">Position on chart</span>
<span class="v" style="left:304px">Right Bottom</span>
</div>
<div class="row g" style="top:485px">
<svg class="ic" width="16" height="16"><use href="#i-n"/></svg>
<span class="t">X offset (pix)</span>
<span class="v" style="left:304px">0</span>
</div>
<div class="row" style="top:505px">
<svg class="ic" width="16" height="16"><use href="#i-n"/></svg>
<span class="t">Y offset (pix)</span>
<span class="v" style="left:304px">0</span>
</div>
<div class="row g" style="top:525px">
<svg class="ic" width="16" height="16"><use href="#i-b"/></svg>
<span class="t">Allow to move the table manually</span>
<span class="v" style="left:304px">true</span>
</div>
<div class="row" style="top:545px">
<svg class="ic" width="16" height="16"><use href="#i-d"/></svg>
<span class="t">Refresh dashboard every (seconds)</span>
<span class="v" style="left:304px">1.0</span>
</div>
<div class="row g" style="top:565px">
<svg class="ic" width="16" height="16"><use href="#i-b"/></svg>
<span class="t">Open the pair in a new window</span>
<span class="v" style="left:304px">false</span>
</div>
<div class="row" style="top:585px">
<svg class="ic" width="16" height="16"><use href="#i-ab"/></svg>
<span class="t">Chart template</span>
</div>
<div class="row g" style="top:605px">
<svg class="ic" width="16" height="16"><use href="#i-n"/></svg>
<span class="t">Code arrow Up</span>
<span class="v" style="left:304px">236</span>
</div>
<div class="row" style="top:625px">
<svg class="ic" width="16" height="16"><use href="#i-n"/></svg>
<span class="t">Code arrow Down</span>
<span class="v" style="left:304px">238</span>
</div>
<div class="row g" style="top:645px">
<svg class="ic" width="16" height="16"><use href="#i-c"/></svg>
<span class="t">Color arrow Up</span>
<span class="sw" style="left:305.5px;background:#00aa00"></span><span class="v" style="left:320.5px">0,170,0</span>
</div>
<div class="row" style="top:665px">
<svg class="ic" width="16" height="16"><use href="#i-c"/></svg>
<span class="t">Color arrow Down</span>
<span class="sw" style="left:305.5px;background:#ff4500"></span><span class="v" style="left:320.5px">OrangeRed</span>
</div>
<div class="row g" style="top:685px">
<svg class="ic" width="16" height="16"><use href="#i-c"/></svg>
<span class="t">Color when the MACD line crosses the Signal line Up</span>
<span class="sw" style="left:305.5px;background:#0000ff"></span><span class="v" style="left:320.5px">Blue</span>
</div>
<div class="row" style="top:705px">
<svg class="ic" width="16" height="16"><use href="#i-c"/></svg>
<span class="t">Color when the MACD line crosses the Signal line Down</span>
<span class="sw" style="left:305.5px;background:#dc143c"></span><span class="v" style="left:320.5px">Crimson</span>
</div>
<div class="row g" style="top:725px">
<svg class="ic" width="16" height="16"><use href="#i-c"/></svg>
<span class="t">Color cell above Zero</span>
<span class="sw" style="left:305.5px;background:#efeffc"></span><span class="v" style="left:320.5px">239,239,252</span>
</div>
<div class="row" style="top:745px">
<svg class="ic" width="16" height="16"><use href="#i-c"/></svg>
<span class="t">Color cell below Zero</span>
<span class="sw" style="left:305.5px;background:#ffffbb"></span><span class="v" style="left:320.5px">255,255,187</span>
</div>
</div>
</div>
<div class="abs" style="left:1324px;top:272px;width:190px;height:19px;border:1px solid #0a5ea8;background:#cce4f7;font-size:11px;letter-spacing:-0.25px;z-index:5"><span style="position:absolute;left:3px;top:3px;line-height:13px">Both</span></div>
<div class="abs" style="left:1324px;top:293px;width:190px;height:52px;border:1px solid #0078d7;background:#fff;font-size:11px;letter-spacing:-0.25px;z-index:5;box-shadow:2px 2px 3px rgba(0,0,0,0.4)">
<div style="position:absolute;left:0;right:0;top:1px;height:13px;line-height:13px;"><span style="position:absolute;left:2px;top:0">Regular divergence</span></div>
<div style="position:absolute;left:0;right:0;top:14px;height:13px;line-height:13px;"><span style="position:absolute;left:2px;top:0">Hidden divergence</span></div>
<div style="position:absolute;left:0;right:0;top:27px;height:13px;line-height:13px;background:#0078d7;color:#fff;"><span style="position:absolute;left:2px;top:0">Both</span></div>
<div style="position:absolute;left:0;right:0;top:40px;height:13px;line-height:13px;"><span style="position:absolute;left:2px;top:0">disable</span></div>
</div>
<svg class="abs" style="left:1437px;top:282px;z-index:8" width="14" height="22"><polygon points="0.5,0.5 0.5,16.5 4.2,13 7,19.2 9.6,18 6.9,12.2 11.8,12.2" fill="#fff" stroke="#000" stroke-width="1" stroke-linejoin="miter"/></svg>
<div class="abs" style="left:1506px;top:0;width:412px;height:819px;z-index:6;overflow:hidden">
<div class="dlg" style="left:0px;width:412px">
<div class="title" style="left:8px">Custom Indicator - MACD_Dashboard</div>
<div class="gray"></div>
<div class="page" style="left:6px"></div>
<div class="tab" style="left:8px;width:42px">About</div>
<div class="tab" style="left:49px;width:53px">Common</div>
<div class="tab sel" style="left:101px;width:46px">Inputs</div>
<div class="tab" style="left:146px;width:41px">Colors</div>
<div class="tab" style="left:186px;width:69px">Visualization</div>
<div class="tbl" style="left:18px">
<div class="hdr"><span style="left:7px">Variable</span><span style="left:308.5px">Value</span></div>
<div class="vdiv" style="left:302px;bottom:auto;height:745px"></div>
<div class="row g" style="top:25px">
<svg class="ic" width="16" height="16"><use href="#i-n"/></svg>
<span class="t">Width (pix)</span>
<span class="v" style="left:304px">300</span>
</div>
<div class="row" style="top:45px">
<svg class="ic" width="16" height="16"><use href="#i-n"/></svg>
<span class="t">Height (pix)</span>
<span class="v" style="left:304px">150</span>
</div>
<div class="row g" style="top:65px">
<svg class="ic" width="16" height="16"><use href="#i-n"/></svg>
<span class="t">Y-offset (pix, +/-)</span>
<span class="v" style="left:304px">20</span>
</div>
<div class="row" style="top:85px">
<svg class="ic" width="16" height="16"><use href="#i-n"/></svg>
<span class="t">Font size</span>
<span class="v" style="left:304px">11</span>
</div>
<div class="row g" style="top:105px">
<svg class="ic" width="16" height="16"><use href="#i-ab"/></svg>
<span class="t">Font name</span>
<span class="v" style="left:304px">Tahoma</span>
</div>
<div class="row" style="top:125px">
<svg class="ic" width="16" height="16"><use href="#i-n"/></svg>
<span class="t">Transparency (0-255)</span>
<span class="v" style="left:304px">230</span>
</div>
<div class="row g" style="top:145px">
<svg class="ic" width="16" height="16"><use href="#i-b"/></svg>
<span class="t">Enable text tooltip in the table</span>
<span class="v" style="left:304px">true</span>
</div>
<div class="row" style="top:165px">
<svg class="ic" width="16" height="16"><use href="#i-b"/></svg>
<span class="t">Show Divergence Arrow</span>
<span class="v" style="left:304px">true</span>
</div>
<div class="row g" style="top:185px">
<svg class="ic" width="16" height="16"><use href="#i-b"/></svg>
<span class="t">Show Divergence Line</span>
<span class="v" style="left:304px">true</span>
</div>
<div class="row" style="top:205px">
<svg class="ic" width="16" height="16"><use href="#i-ab"/></svg>
<span class="t">-    -   -- ---- Current Chart ---- --   -    -</span>
</div>
<div class="row g" style="top:225px">
<svg class="ic" width="16" height="16"><use href="#i-b"/></svg>
<span class="t">Show arrows when MACD crosses Signal line</span>
<span class="v" style="left:304px">true</span>
</div>
<div class="row" style="top:245px">
<svg class="ic" width="16" height="16"><use href="#i-n"/></svg>
<span class="t">Code Buy (Lines crossover)</span>
<span class="v" style="left:304px">233</span>
</div>
<div class="row g" style="top:265px">
<svg class="ic" width="16" height="16"><use href="#i-n"/></svg>
<span class="t">Code Sell (Lines crossover)</span>
<span class="v" style="left:304px">234</span>
</div>
<div class="row" style="top:285px">
<svg class="ic" width="16" height="16"><use href="#i-b"/></svg>
<span class="t">Show arrows when MACD line crosses Zero level</span>
<span class="v" style="left:304px">true</span>
</div>
<div class="row g" style="top:305px">
<svg class="ic" width="16" height="16"><use href="#i-n"/></svg>
<span class="t">Code Buy (Zero crossover)</span>
<span class="v" style="left:304px">108</span>
</div>
<div class="row" style="top:325px">
<svg class="ic" width="16" height="16"><use href="#i-n"/></svg>
<span class="t">Code Sell (Zero crossover)</span>
<span class="v" style="left:304px">108</span>
</div>
<div class="row g" style="top:345px">
<svg class="ic" width="16" height="16"><use href="#i-b"/></svg>
<span class="t">Show Divergence Arrow</span>
<span class="v" style="left:304px">true</span>
</div>
<div class="row" style="top:365px">
<svg class="ic" width="16" height="16"><use href="#i-b"/></svg>
<span class="t">Show Divergence Line</span>
<span class="v" style="left:304px">true</span>
</div>
<div class="row g" style="top:385px">
<svg class="ic" width="16" height="16"><use href="#i-n"/></svg>
<span class="t">Divergence Code Regular Bullish</span>
<span class="v" style="left:304px">236</span>
</div>
<div class="row" style="top:405px">
<svg class="ic" width="16" height="16"><use href="#i-n"/></svg>
<span class="t">Divergence Code Regular Bearish</span>
<span class="v" style="left:304px">238</span>
</div>
<div class="row g" style="top:425px">
<svg class="ic" width="16" height="16"><use href="#i-n"/></svg>
<span class="t">Divergence Code Hidden Bullish</span>
<span class="v" style="left:304px">236</span>
</div>
<div class="row" style="top:445px">
<svg class="ic" width="16" height="16"><use href="#i-n"/></svg>
<span class="t">Divergence Code Hidden Bearish</span>
<span class="v" style="left:304px">238</span>
</div>
<div class="row g" style="top:465px">
<svg class="ic" width="16" height="16"><use href="#i-c"/></svg>
<span class="t">Divergence Line color Regular Bullish</span>
<span class="sw" style="left:305.5px;background:#008000"></span><span class="v" style="left:320.5px">Green</span>
</div>
<div class="row" style="top:485px">
<svg class="ic" width="16" height="16"><use href="#i-c"/></svg>
<span class="t">Divergence Line color Regular Bearish</span>
<span class="sw" style="left:305.5px;background:#ff0000"></span><span class="v" style="left:320.5px">Red</span>
</div>
<div class="row g" style="top:505px">
<svg class="ic" width="16" height="16"><use href="#i-n"/></svg>
<span class="t">Divergence Line style Regular</span>
<span class="v" style="left:304px">Solid</span>
</div>
<div class="row" style="top:525px">
<svg class="ic" width="16" height="16"><use href="#i-n"/></svg>
<span class="t">Divergence Line width Regular</span>
<span class="v" style="left:304px">thin</span>
</div>
<div class="row g" style="top:545px">
<svg class="ic" width="16" height="16"><use href="#i-c"/></svg>
<span class="t">Divergence Line color Hidden Bullish</span>
<span class="sw" style="left:305.5px;background:#0000ff"></span><span class="v" style="left:320.5px">Blue</span>
</div>
<div class="row" style="top:565px">
<svg class="ic" width="16" height="16"><use href="#i-c"/></svg>
<span class="t">Divergence Line color Hidden Bearish</span>
<span class="sw" style="left:305.5px;background:#8a2be2"></span><span class="v" style="left:320.5px">BlueViolet</span>
</div>
<div class="row g" style="top:585px">
<svg class="ic" width="16" height="16"><use href="#i-n"/></svg>
<span class="t">Divergence Line style Hidden</span>
<span class="v" style="left:304px">Dot</span>
</div>
<div class="row" style="top:605px">
<svg class="ic" width="16" height="16"><use href="#i-n"/></svg>
<span class="t">Divergence Line width Hidden</span>
<span class="v" style="left:304px">thin</span>
</div>
<div class="row g" style="top:625px">
<svg class="ic" width="16" height="16"><use href="#i-ab"/></svg>
<span class="t">-    -   -- ---- Hotkeys ---- --   -    -</span>
</div>
<div class="row" style="top:645px">
<svg class="ic" width="16" height="16"><use href="#i-n"/></svg>
<span class="t">Hotkey to show/hide the Dashboard</span>
<span class="v" style="left:304px">D</span>
</div>
<div class="row g" style="top:665px">
<svg class="ic" width="16" height="16"><use href="#i-n"/></svg>
<span class="t">Hotkey to enable/disable the Popup chart</span>
<span class="v" style="left:304px">C</span>
</div>
<div class="row" style="top:685px">
<svg class="ic" width="16" height="16"><use href="#i-n"/></svg>
<span class="t">Hotkey to toggle Arrows 'MACD crosses Signal line'</span>
<span class="v" style="left:304px">1</span>
</div>
<div class="row g" style="top:705px">
<svg class="ic" width="16" height="16"><use href="#i-n"/></svg>
<span class="t">Hotkey to toggle Arrows 'MACD line crosses Zero level'</span>
<span class="v" style="left:304px">2</span>
</div>
<div class="row hi" style="top:725px">
<svg class="ic" width="16" height="16"><use href="#i-n"/></svg>
<span class="t">Hotkey to toggle 'Divergence'</span>
<span class="v" style="left:304px">3</span>
</div>
</div>
</div>
<div class="abs" style="left:6px;top:408px;width:347px;height:39px;border:4px solid #ff0000;z-index:7"></div>
<svg class="abs" style="left:374px;top:424px;z-index:8" width="14" height="22"><polygon points="0.5,0.5 0.5,16.5 4.2,13 7,19.2 9.6,18 6.9,12.2 11.8,12.2" fill="#fff" stroke="#000" stroke-width="1" stroke-linejoin="miter"/></svg>
</div></body></html>
